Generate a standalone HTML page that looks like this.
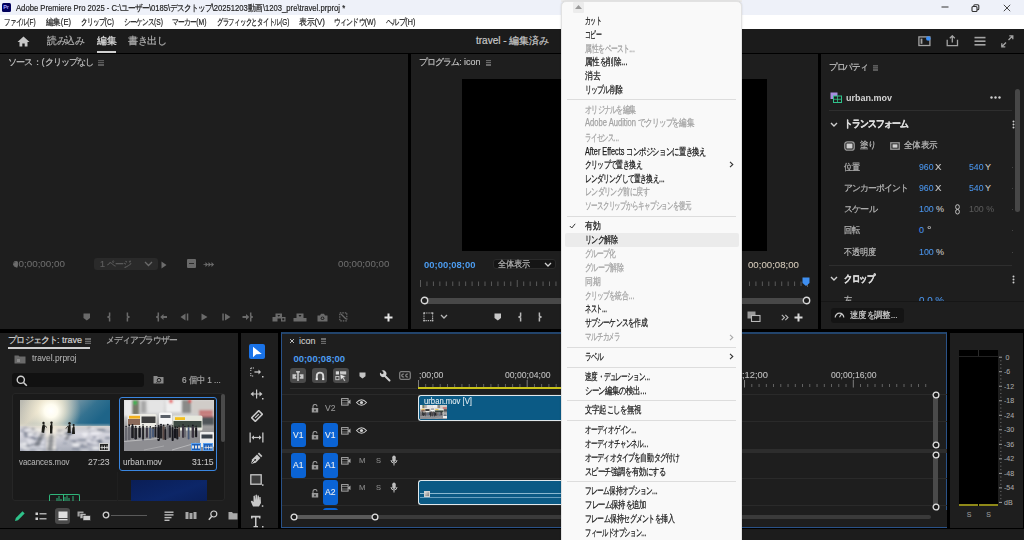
<!DOCTYPE html>
<html><head><meta charset="utf-8"><style>*{box-sizing:border-box;margin:0;padding:0}
html,body{width:1024px;height:540px;overflow:hidden;background:#000;font-family:"Liberation Sans",sans-serif;position:relative}
.a{position:absolute}
.t{position:absolute;white-space:nowrap;line-height:1;transform-origin:0 50%}
</style></head><body>
<div class="a" style="left:0px;top:0px;width:1024px;height:15px;background:#eef1f9;"></div>
<div class="a" style="left:0px;top:15px;width:1024px;height:14px;background:#ffffff;"></div>
<div class="a" style="left:0px;top:29px;width:1024px;height:24px;background:#1b1b1b;"></div>
<div class="a" style="left:0px;top:54px;width:408px;height:275px;background:#1e1e1e;"></div>
<div class="a" style="left:411px;top:54px;width:407px;height:275px;background:#1e1e1e;"></div>
<div class="a" style="left:821px;top:54px;width:203px;height:275px;background:#1e1e1e;"></div>
<div class="a" style="left:0px;top:332.5px;width:237.5px;height:195.5px;background:#1e1e1e;"></div>
<div class="a" style="left:240.5px;top:332.5px;width:37.5px;height:195.5px;background:#1e1e1e;"></div>
<div class="a" style="left:281.2px;top:331.8px;width:666px;height:196.2px;background:#1e1e1e;border:1px solid #2a5288;border-top:2px solid #22446c;"></div>
<div class="a" style="left:950px;top:332.5px;width:73px;height:195.5px;background:#1e1e1e;"></div>
<div class="a" style="left:0px;top:528.5px;width:1024px;height:11.5px;background:#1c1c1c;"></div>
<div class="a" style="left:2px;top:3.3px;width:9.3px;height:8.3px;background:#00005b;border-radius:1.5px;"></div>
<div class="t" style="left:3.2px;top:4.75px;font-size:5.5px;color:#a6a6ff;font-weight:bold;">Pr</div>
<div class="t" style="left:15.5px;top:3.80px;font-size:9px;color:#1f1f1f;transform:scaleX(0.852);-webkit-text-stroke:0.2px #1f1f1f;">Adobe Premiere Pro 2025 - C:\<span style="letter-spacing:-0.1em">ユーザー</span>\0185\<span style="letter-spacing:-0.1em">デスクトップ</span>\20251203<span style="letter-spacing:-0.02em">動画</span>\1203_pre\travel.prproj *</div>
<svg class="a" style="left:940.5px;top:5px;" width="8" height="4" viewBox="0 0 8 4"><line x1="0.5" y1="2" x2="7.5" y2="2" stroke="#333" stroke-width="1"/></svg>
<svg class="a" style="left:971px;top:3.5px;" width="9" height="8" viewBox="0 0 9 8"><rect x="1" y="2.5" width="5" height="5" rx="1" fill="none" stroke="#333" stroke-width="1.1"/><path d="M2.8 2.5V1.8Q2.8 0.8 3.8 0.8H6.8Q7.8 0.8 7.8 1.8V4.8Q7.8 5.8 6.8 5.8H6" fill="none" stroke="#333" stroke-width="1.1"/></svg>
<svg class="a" style="left:1003px;top:3.5px;" width="8" height="8" viewBox="0 0 8 8"><path d="M0.8 0.8L7.2 7.2M7.2 0.8L0.8 7.2" stroke="#333" stroke-width="0.9"/></svg>
<div class="t" style="left:4.4px;top:17.50px;font-size:9px;color:#1f1f1f;transform:scaleX(0.720);-webkit-text-stroke:0.2px #1f1f1f;"><span style="letter-spacing:-0.1em">ファイル</span>(F)</div>
<div class="t" style="left:46px;top:17.50px;font-size:9px;color:#1f1f1f;transform:scaleX(0.843);-webkit-text-stroke:0.2px #1f1f1f;"><span style="letter-spacing:-0.02em">編集</span>(E)</div>
<div class="t" style="left:81px;top:17.50px;font-size:9px;color:#1f1f1f;transform:scaleX(0.735);-webkit-text-stroke:0.2px #1f1f1f;"><span style="letter-spacing:-0.1em">クリップ</span>(C)</div>
<div class="t" style="left:124px;top:17.50px;font-size:9px;color:#1f1f1f;transform:scaleX(0.743);-webkit-text-stroke:0.2px #1f1f1f;"><span style="letter-spacing:-0.1em">シーケンス</span>(S)</div>
<div class="t" style="left:172px;top:17.50px;font-size:9px;color:#1f1f1f;transform:scaleX(0.752);-webkit-text-stroke:0.2px #1f1f1f;"><span style="letter-spacing:-0.1em">マーカー</span>(M)</div>
<div class="t" style="left:216.6px;top:17.50px;font-size:9px;color:#1f1f1f;transform:scaleX(0.709);-webkit-text-stroke:0.2px #1f1f1f;"><span style="letter-spacing:-0.1em">グラフィックとタイトル</span>(G)</div>
<div class="t" style="left:299px;top:17.50px;font-size:9px;color:#1f1f1f;transform:scaleX(0.877);-webkit-text-stroke:0.2px #1f1f1f;"><span style="letter-spacing:-0.02em">表示</span>(V)</div>
<div class="t" style="left:334px;top:17.50px;font-size:9px;color:#1f1f1f;transform:scaleX(0.758);-webkit-text-stroke:0.2px #1f1f1f;"><span style="letter-spacing:-0.1em">ウィンドウ</span>(W)</div>
<div class="t" style="left:385.7px;top:17.50px;font-size:9px;color:#1f1f1f;transform:scaleX(0.796);-webkit-text-stroke:0.2px #1f1f1f;"><span style="letter-spacing:-0.1em">ヘルプ</span>(H)</div>
<svg class="a" style="left:17px;top:36px;" width="13" height="11" viewBox="0 0 13 11"><path d="M6.5 0.5L0.5 6H2.5V10.5H5.3V7.5H7.7V10.5H10.5V6H12.5Z" fill="#c8c8c8"/></svg>
<div class="t" style="left:47px;top:36.00px;font-size:10px;color:#b0b0b0;transform:scaleX(0.983);-webkit-text-stroke:0.2px #b0b0b0;"><span style="letter-spacing:-0.02em">読</span><span style="letter-spacing:-0.1em">み</span><span style="letter-spacing:-0.02em">込</span><span style="letter-spacing:-0.1em">み</span></div>
<div class="t" style="left:96.7px;top:36.00px;font-size:10px;color:#e0e0e0;transform:scaleX(0.984);-webkit-text-stroke:0.2px #e0e0e0;"><span style="letter-spacing:-0.02em">編集</span></div>
<div class="a" style="left:97px;top:51px;width:18.6px;height:1.8px;background:#d0d0d0;"></div>
<div class="t" style="left:128px;top:36.00px;font-size:10px;color:#b0b0b0;transform:scaleX(1.010);-webkit-text-stroke:0.2px #b0b0b0;"><span style="letter-spacing:-0.02em">書</span><span style="letter-spacing:-0.1em">き</span><span style="letter-spacing:-0.02em">出</span><span style="letter-spacing:-0.1em">し</span></div>
<div class="t" style="left:476px;top:36.00px;font-size:10px;color:#c8c8c8;-webkit-text-stroke:0.2px #c8c8c8;">travel - <span style="letter-spacing:-0.02em">編集済</span><span style="letter-spacing:-0.1em">み</span></div>
<svg class="a" style="left:917.5px;top:34px;" width="14" height="13" viewBox="0 0 14 13"><rect x="0.9" y="2.9" width="11" height="8.6" fill="none" stroke="#a4a4a4" stroke-width="1.3"/><rect x="2.6" y="4.6" width="1.8" height="5.2" fill="#a4a4a4"/><circle cx="10.3" cy="4.5" r="2.3" fill="#3d8ff5"/></svg>
<svg class="a" style="left:945.5px;top:34.5px;" width="13" height="12" viewBox="0 0 13 12"><path d="M6.3 0.8V7.5M3.8 3.2L6.3 0.8L8.8 3.2" fill="none" stroke="#a4a4a4" stroke-width="1.3"/><path d="M1.2 4.8V10.6H11.5V4.8" fill="none" stroke="#a4a4a4" stroke-width="1.3"/></svg>
<svg class="a" style="left:973.5px;top:35.5px;" width="12" height="10" viewBox="0 0 12 10"><rect x="0.5" y="0.8" width="11" height="1.6" fill="#a4a4a4"/><rect x="0.5" y="4.4" width="11" height="1.6" fill="#a4a4a4"/><rect x="0.5" y="8" width="11" height="1.6" fill="#a4a4a4"/></svg>
<svg class="a" style="left:1000.5px;top:34.5px;" width="13" height="13" viewBox="0 0 13 13"><path d="M7.5 5L11.8 0.8M8.3 0.8H11.8V4.3M5 7.5L0.8 11.8M0.8 8.3V11.8H4.3" fill="none" stroke="#a4a4a4" stroke-width="1.3"/></svg>
<div class="t" style="left:8.4px;top:58.00px;font-size:9px;color:#bdbdbd;transform:scaleX(1.010);-webkit-text-stroke:0.2px #bdbdbd;"><span style="letter-spacing:-0.1em">ソース</span><span style="letter-spacing:-0.02em">：</span>(<span style="letter-spacing:-0.1em">クリップなし</span></div>
<div class="a" style="left:97.5px;top:59.5px;width:6px;height:6px;background:#5a5a5a;"></div>
<div class="a" style="left:97.5px;top:61.3px;width:6px;height:0.7px;background:#2a2a2a;"></div>
<div class="a" style="left:97.5px;top:63.3px;width:6px;height:0.7px;background:#2a2a2a;"></div>
<div class="t" style="left:12.9px;top:260.00px;font-size:9px;color:#6c6c6c;transform:scaleX(1.094);-webkit-text-stroke:0.08px #6c6c6c;">00;00;00;00</div>
<svg class="a" style="left:12px;top:260px;" width="6" height="9" viewBox="0 0 6 9"><path d="M1 4.5L4 1.5H5.5V7.5H4Z" fill="#6c6c6c"/></svg>
<div class="a" style="left:93.8px;top:258.2px;width:64px;height:11.6px;background:#2a2a2a;border-radius:3px"></div>
<div class="t" style="left:100px;top:259.50px;font-size:9px;color:#5e5e5e;transform:scaleX(0.990);-webkit-text-stroke:0.2px #5e5e5e;">1 <span style="letter-spacing:-0.1em">ページ</span></div>
<svg class="a" style="left:144px;top:261px;" width="9" height="6" viewBox="0 0 9 6"><path d="M1 1L4.5 4.5L8 1" fill="none" stroke="#6a6a6a" stroke-width="1.3"/></svg>
<svg class="a" style="left:161px;top:261px;" width="6" height="8" viewBox="0 0 6 8"><path d="M0.5 0.5L5.5 4L0.5 7.5Z" fill="#6c6c6c"/></svg>
<div class="a" style="left:187px;top:259px;width:8.6px;height:9px;background:#6a6a6a;border-radius:1px"></div>
<div class="a" style="left:189px;top:263px;width:4.6px;height:1px;background:#2a2a2a;"></div>
<svg class="a" style="left:203px;top:261px;" width="11" height="7" viewBox="0 0 11 7"><path d="M0.5 3.5H10.5" stroke="#6a6a6a" stroke-width="0.8"/><path d="M2.5 1L5 3.5L2.5 6ZM5.5 1L8 3.5L5.5 6ZM8.5 1L11 3.5L8.5 6Z" fill="#6a6a6a"/></svg>
<div class="t" style="left:338px;top:260.00px;font-size:9px;color:#6c6c6c;transform:scaleX(1.079);-webkit-text-stroke:0.08px #6c6c6c;">00;00;00;00</div>
<svg class="a" style="left:83px;top:313px;" width="8" height="8" viewBox="0 0 8 8"><path d="M0.5 0.5H7V5L3.8 7.5L0.5 5Z" fill="#6a6a6a"/></svg>
<svg class="a" style="left:106.8px;top:312.0px;" width="4" height="10" viewBox="0 0 4 10"><path d="M2.6 0.5V4.1L1 5L2.6 5.9V9.5" fill="none" stroke="#6a6a6a" stroke-width="1.5"/></svg>
<svg class="a" style="left:126.4px;top:312.0px;" width="4" height="10" viewBox="0 0 4 10"><path d="M1.4 0.5V4.1L3 5L1.4 5.9V9.5" fill="none" stroke="#6a6a6a" stroke-width="1.5"/></svg>
<svg class="a" style="left:156px;top:312px;" width="12" height="10" viewBox="0 0 12 10"><path d="M2.3 0.5V4.1L0.8 5L2.3 5.9V9.5" fill="none" stroke="#6a6a6a" stroke-width="1.5"/><path d="M4.2 5L7.5 2V4H11V6H7.5V8Z" fill="#6a6a6a"/></svg>
<svg class="a" style="left:179.5px;top:312.7px;" width="9" height="8" viewBox="0 0 9 8"><path d="M0.5 4L5.5 0.5V7.5Z" fill="#6a6a6a"/><rect x="6.8" y="0.5" width="1.5" height="7" fill="#6a6a6a"/></svg>
<svg class="a" style="left:201px;top:312.7px;" width="7" height="8" viewBox="0 0 7 8"><path d="M0.5 0.5L6.5 4L0.5 7.5Z" fill="#6a6a6a"/></svg>
<svg class="a" style="left:221.5px;top:312.7px;" width="9" height="8" viewBox="0 0 9 8"><rect x="0.3" y="0.5" width="1.5" height="7" fill="#6a6a6a"/><path d="M3 0.5L8.5 4L3 7.5Z" fill="#6a6a6a"/></svg>
<svg class="a" style="left:242px;top:312px;" width="11" height="10" viewBox="0 0 11 10"><path d="M0.5 4H4V2L7.3 5L4 8V6H0.5Z" fill="#6a6a6a"/><path d="M8.7 0.5V4.1L10.2 5L8.7 5.9V9.5" fill="none" stroke="#6a6a6a" stroke-width="1.5"/></svg>
<svg class="a" style="left:272px;top:312.5px;" width="14" height="9" viewBox="0 0 14 9"><rect x="0.5" y="4" width="5" height="4.5" fill="#6a6a6a"/><rect x="3.5" y="0.5" width="6.5" height="5" fill="#6a6a6a"/><path d="M5.3 2H8.2L6.75 3.8Z" fill="#1e1e1e"/><rect x="9" y="4" width="4.5" height="4.5" fill="#6a6a6a"/><rect x="10.3" y="5.3" width="2" height="2" fill="#1e1e1e"/></svg>
<svg class="a" style="left:293px;top:312.5px;" width="14" height="9" viewBox="0 0 14 9"><rect x="0.5" y="5" width="13" height="3.5" fill="#6a6a6a"/><rect x="3.5" y="0.5" width="7" height="6" fill="#6a6a6a"/><path d="M5.5 2H8.5L7 4Z" fill="#1e1e1e"/></svg>
<svg class="a" style="left:317px;top:312.5px;" width="11" height="9" viewBox="0 0 11 9"><path d="M0.5 2.5H3L4 0.8H7L8 2.5H10.5V8.5H0.5Z" fill="#6a6a6a"/><circle cx="5.5" cy="5.3" r="1.8" fill="#1e1e1e"/><circle cx="5.5" cy="5.3" r="1" fill="#6a6a6a"/></svg>
<svg class="a" style="left:338.5px;top:312px;" width="9" height="10" viewBox="0 0 9 10"><rect x="0.8" y="0.8" width="7" height="8" fill="none" stroke="#6a6a6a" stroke-width="1.2" stroke-dasharray="1.5 1"/><path d="M2 2L7 7" stroke="#6a6a6a" stroke-width="1.2"/></svg>
<svg class="a" style="left:384px;top:313px;" width="9" height="9" viewBox="0 0 9 9"><path d="M4.5 0.5V8.5M0.5 4.5H8.5" stroke="#e6e6e6" stroke-width="2"/></svg>
<div class="t" style="left:419px;top:58.00px;font-size:9px;color:#bdbdbd;transform:scaleX(0.991);-webkit-text-stroke:0.2px #bdbdbd;"><span style="letter-spacing:-0.1em">プログラム</span>: icon</div>
<div class="a" style="left:485.5px;top:59.5px;width:5.2px;height:6px;background:#6a6a6a;"></div>
<div class="a" style="left:485.5px;top:61.3px;width:5.2px;height:0.7px;background:#2a2a2a;"></div>
<div class="a" style="left:485.5px;top:63.3px;width:5.2px;height:0.7px;background:#2a2a2a;"></div>
<div class="a" style="left:462px;top:79px;width:305px;height:171.5px;background:#000000;"></div>
<div class="t" style="left:424.4px;top:259.75px;font-size:9.5px;color:#4c9cf0;font-weight:bold;transform:scaleX(0.993);">00;00;08;00</div>
<div class="a" style="left:492.7px;top:258.5px;width:63.3px;height:10.5px;background:#151515;border:1px solid #2a2a2a;border-radius:3px"></div>
<div class="t" style="left:498px;top:259.50px;font-size:9px;color:#b4b4b4;transform:scaleX(0.907);-webkit-text-stroke:0.2px #b4b4b4;"><span style="letter-spacing:-0.02em">全体表示</span></div>
<svg class="a" style="left:543.5px;top:261.5px;" width="8" height="6" viewBox="0 0 8 6"><path d="M1 1L4 4L7 1" fill="none" stroke="#d0d0d0" stroke-width="1.3"/></svg>
<div class="t" style="left:748px;top:259.75px;font-size:9.5px;color:#d2c8b8;transform:scaleX(1.016);-webkit-text-stroke:0.08px #d2c8b8;">00;00;08;00</div>
<svg class="a" style="left:411px;top:278px;" width="407" height="12" viewBox="0 0 407 12"><rect x="9.00" y="2" width="1" height="7" fill="#5a5a5a"/><rect x="15.45" y="3.5" width="1" height="4.5" fill="#5a5a5a"/><rect x="21.90" y="3.5" width="1" height="4.5" fill="#5a5a5a"/><rect x="28.35" y="3.5" width="1" height="4.5" fill="#5a5a5a"/><rect x="34.80" y="3.5" width="1" height="4.5" fill="#5a5a5a"/><rect x="41.25" y="3.5" width="1" height="4.5" fill="#5a5a5a"/><rect x="47.70" y="3.5" width="1" height="4.5" fill="#5a5a5a"/><rect x="54.15" y="3.5" width="1" height="4.5" fill="#5a5a5a"/><rect x="60.60" y="3.5" width="1" height="4.5" fill="#5a5a5a"/><rect x="67.05" y="3.5" width="1" height="4.5" fill="#5a5a5a"/><rect x="73.50" y="3.5" width="1" height="4.5" fill="#5a5a5a"/><rect x="79.95" y="3.5" width="1" height="4.5" fill="#5a5a5a"/><rect x="86.40" y="3.5" width="1" height="4.5" fill="#5a5a5a"/><rect x="92.85" y="3.5" width="1" height="4.5" fill="#5a5a5a"/><rect x="99.30" y="3.5" width="1" height="4.5" fill="#5a5a5a"/><rect x="105.75" y="2" width="1" height="7" fill="#5a5a5a"/><rect x="112.20" y="3.5" width="1" height="4.5" fill="#5a5a5a"/><rect x="118.65" y="3.5" width="1" height="4.5" fill="#5a5a5a"/><rect x="125.10" y="3.5" width="1" height="4.5" fill="#5a5a5a"/><rect x="131.55" y="3.5" width="1" height="4.5" fill="#5a5a5a"/><rect x="138.00" y="3.5" width="1" height="4.5" fill="#5a5a5a"/><rect x="144.45" y="3.5" width="1" height="4.5" fill="#5a5a5a"/><rect x="337.95" y="3.5" width="1" height="4.5" fill="#5a5a5a"/><rect x="344.40" y="3.5" width="1" height="4.5" fill="#5a5a5a"/><rect x="350.85" y="3.5" width="1" height="4.5" fill="#5a5a5a"/><rect x="357.30" y="3.5" width="1" height="4.5" fill="#5a5a5a"/><rect x="363.75" y="3.5" width="1" height="4.5" fill="#5a5a5a"/><rect x="370.20" y="3.5" width="1" height="4.5" fill="#5a5a5a"/><rect x="376.65" y="3.5" width="1" height="4.5" fill="#5a5a5a"/><rect x="383.10" y="3.5" width="1" height="4.5" fill="#5a5a5a"/><rect x="389.55" y="3.5" width="1" height="4.5" fill="#5a5a5a"/><rect x="396.00" y="2" width="1" height="7" fill="#5a5a5a"/></svg>
<svg class="a" style="left:802px;top:276.5px;" width="8" height="10" viewBox="0 0 8 10"><path d="M0.5 0.5H7.5V6L4 9L0.5 6Z" fill="#3f8ff0"/></svg>
<div class="a" style="left:424px;top:297.5px;width:382px;height:6px;background:#484848;border-radius:3px;"></div>
<svg class="a" style="left:420px;top:296px;" width="9" height="9" viewBox="0 0 9 9"><circle cx="4.5" cy="4.5" r="3.2" fill="#1e1e1e" stroke="#d8d8d8" stroke-width="1.4"/></svg>
<svg class="a" style="left:802px;top:296px;" width="9" height="9" viewBox="0 0 9 9"><circle cx="4.5" cy="4.5" r="3.2" fill="#1e1e1e" stroke="#d8d8d8" stroke-width="1.4"/></svg>
<svg class="a" style="left:422.5px;top:312.3px;" width="11" height="10" viewBox="0 0 11 10"><rect x="1" y="1" width="8.6" height="7.6" fill="none" stroke="#b8b8b8" stroke-width="1.1" stroke-dasharray="1.3 0.9"/><rect x="0.3" y="0.3" width="1.6" height="1.6" fill="#b8b8b8"/><rect x="8.7" y="0.3" width="1.6" height="1.6" fill="#b8b8b8"/><rect x="0.3" y="7.7" width="1.6" height="1.6" fill="#b8b8b8"/><rect x="8.7" y="7.7" width="1.6" height="1.6" fill="#b8b8b8"/></svg>
<svg class="a" style="left:439.5px;top:314px;" width="8" height="6" viewBox="0 0 8 6"><path d="M1 1L4 4L7 1" fill="none" stroke="#b8b8b8" stroke-width="1.3"/></svg>
<svg class="a" style="left:494px;top:313px;" width="8" height="8" viewBox="0 0 8 8"><path d="M0.5 0.5H7V5L3.8 7.5L0.5 5Z" fill="#c8c8c8"/></svg>
<svg class="a" style="left:518px;top:312.0px;" width="4" height="10" viewBox="0 0 4 10"><path d="M2.6 0.5V4.1L1 5L2.6 5.9V9.5" fill="none" stroke="#b8b8b8" stroke-width="1.5"/></svg>
<svg class="a" style="left:537.5px;top:312.0px;" width="4" height="10" viewBox="0 0 4 10"><path d="M1.4 0.5V4.1L3 5L1.4 5.9V9.5" fill="none" stroke="#b8b8b8" stroke-width="1.5"/></svg>
<svg class="a" style="left:746.5px;top:311px;" width="14" height="11" viewBox="0 0 14 11"><rect x="0.5" y="0.5" width="8" height="7" fill="#9a9a9a"/><rect x="4.5" y="4.5" width="8.5" height="6" fill="#1e1e1e" stroke="#b8b8b8" stroke-width="1.1"/></svg>
<svg class="a" style="left:780.5px;top:314px;" width="8" height="7" viewBox="0 0 8 7"><path d="M0.8 0.8L3.5 3.5L0.8 6.2M4.3 0.8L7 3.5L4.3 6.2" fill="none" stroke="#b8b8b8" stroke-width="1.1"/></svg>
<svg class="a" style="left:793.5px;top:313px;" width="9" height="9" viewBox="0 0 9 9"><path d="M4.5 0.5V8.5M0.5 4.5H8.5" stroke="#d8d8d8" stroke-width="2"/></svg>
<div class="t" style="left:829.4px;top:63.00px;font-size:9px;color:#bdbdbd;transform:scaleX(0.953);-webkit-text-stroke:0.2px #bdbdbd;"><span style="letter-spacing:-0.1em">プロパティ</span></div>
<div class="a" style="left:872.8px;top:64.5px;width:5.2px;height:6px;background:#5a5a5a;"></div>
<div class="a" style="left:872.8px;top:66.3px;width:5.2px;height:0.7px;background:#444;"></div>
<div class="a" style="left:872.8px;top:68.3px;width:5.2px;height:0.7px;background:#444;"></div>
<svg class="a" style="left:830px;top:92px;" width="12" height="11" viewBox="0 0 12 11"><rect x="0.5" y="0.5" width="7" height="6.5" fill="#a88ee0"/><rect x="3.5" y="4" width="8" height="6.5" fill="#1e1e1e" stroke="#2fc28a" stroke-width="1"/><path d="M3.5 7.25H11.5M7.5 4V10.5" stroke="#2fc28a" stroke-width="0.8"/></svg>
<div class="t" style="left:846px;top:92.75px;font-size:9.5px;color:#d4d4d4;font-weight:bold;transform:scaleX(0.947);">urban.mov</div>
<svg class="a" style="left:990px;top:95.5px;" width="11" height="3" viewBox="0 0 11 3"><circle cx="1.5" cy="1.5" r="1.2" fill="#cfcfcf"/><circle cx="5.5" cy="1.5" r="1.2" fill="#cfcfcf"/><circle cx="9.5" cy="1.5" r="1.2" fill="#cfcfcf"/></svg>
<div class="a" style="left:829px;top:110px;width:183px;height:1px;background:#2e2e2e;"></div>
<svg class="a" style="left:829.5px;top:121.5px;" width="8" height="6" viewBox="0 0 8 6"><path d="M1 1L4 4L7 1" fill="none" stroke="#d0d0d0" stroke-width="1.4"/></svg>
<div class="t" style="left:843.7px;top:119.45px;font-size:9.5px;color:#dadada;font-weight:bold;transform:scaleX(0.878);-webkit-text-stroke:0.35px #dadada;"><span style="letter-spacing:-0.1em">トランスフォーム</span></div>
<svg class="a" style="left:1011.5px;top:120px;" width="3" height="9" viewBox="0 0 3 9"><circle cx="1.5" cy="1.5" r="1" fill="#cfcfcf"/><circle cx="1.5" cy="4.5" r="1" fill="#cfcfcf"/><circle cx="1.5" cy="7.5" r="1" fill="#cfcfcf"/></svg>
<div class="a" style="left:1014.5px;top:89px;width:5.5px;height:123px;background:#474747;border-radius:3px;"></div>
<svg class="a" style="left:844px;top:141px;" width="11" height="10" viewBox="0 0 11 10"><rect x="0.8" y="0.8" width="9.4" height="8.4" rx="2.5" fill="none" stroke="#9a9a9a" stroke-width="1.3"/><rect x="2.5" y="2.5" width="6" height="5" fill="#cfcfcf"/></svg>
<div class="t" style="left:859.7px;top:141.00px;font-size:9px;color:#bdbdbd;transform:scaleX(0.921);-webkit-text-stroke:0.2px #bdbdbd;"><span style="letter-spacing:-0.02em">塗</span><span style="letter-spacing:-0.1em">り</span></div>
<svg class="a" style="left:889.5px;top:142px;" width="10" height="8" viewBox="0 0 10 8"><rect x="0.8" y="0.8" width="8.4" height="6.4" fill="none" stroke="#9a9a9a" stroke-width="1.3"/><rect x="2.5" y="2.3" width="5" height="3.4" fill="#cfcfcf"/></svg>
<div class="t" style="left:904px;top:141.00px;font-size:9px;color:#bdbdbd;transform:scaleX(0.950);-webkit-text-stroke:0.2px #bdbdbd;"><span style="letter-spacing:-0.02em">全体表示</span></div>
<div class="t" style="left:844.4px;top:162.90px;font-size:9px;color:#b8b8b8;transform:scaleX(0.907);-webkit-text-stroke:0.2px #b8b8b8;"><span style="letter-spacing:-0.02em">位置</span></div>
<div class="t" style="left:844.4px;top:183.80px;font-size:9px;color:#b8b8b8;transform:scaleX(0.981);-webkit-text-stroke:0.2px #b8b8b8;"><span style="letter-spacing:-0.1em">アンカーポイント</span></div>
<div class="t" style="left:844.4px;top:205.00px;font-size:9px;color:#b8b8b8;transform:scaleX(1.012);-webkit-text-stroke:0.2px #b8b8b8;"><span style="letter-spacing:-0.1em">スケール</span></div>
<div class="t" style="left:844.4px;top:226.10px;font-size:9px;color:#b8b8b8;transform:scaleX(0.907);-webkit-text-stroke:0.2px #b8b8b8;"><span style="letter-spacing:-0.02em">回転</span></div>
<div class="t" style="left:844.4px;top:247.50px;font-size:9px;color:#b8b8b8;transform:scaleX(0.907);-webkit-text-stroke:0.2px #b8b8b8;"><span style="letter-spacing:-0.02em">不透明度</span></div>
<div class="a" style="left:1011.5px;top:166.9px;width:1px;height:1px;background:#444;"></div>
<div class="a" style="left:1011.5px;top:187.8px;width:1px;height:1px;background:#444;"></div>
<div class="a" style="left:1011.5px;top:209.0px;width:1px;height:1px;background:#444;"></div>
<div class="a" style="left:1011.5px;top:230.1px;width:1px;height:1px;background:#444;"></div>
<div class="a" style="left:1011.5px;top:251.5px;width:1px;height:1px;background:#444;"></div>
<div class="t" style="left:919px;top:162.90px;font-size:9px;color:#4a94ea;transform:scaleX(0.965);-webkit-text-stroke:0.08px #4a94ea;">960</div>
<div class="t" style="left:935px;top:162.90px;font-size:9px;color:#c8c8c8;transform:scaleX(1.081);-webkit-text-stroke:0.08px #c8c8c8;">X</div>
<div class="t" style="left:969px;top:162.90px;font-size:9px;color:#4a94ea;transform:scaleX(0.965);-webkit-text-stroke:0.08px #4a94ea;">540</div>
<div class="t" style="left:985px;top:162.90px;font-size:9px;color:#c8c8c8;-webkit-text-stroke:0.08px #c8c8c8;">Y</div>
<div class="t" style="left:919px;top:183.80px;font-size:9px;color:#4a94ea;transform:scaleX(0.965);-webkit-text-stroke:0.08px #4a94ea;">960</div>
<div class="t" style="left:935px;top:183.80px;font-size:9px;color:#c8c8c8;transform:scaleX(1.081);-webkit-text-stroke:0.08px #c8c8c8;">X</div>
<div class="t" style="left:969px;top:183.80px;font-size:9px;color:#4a94ea;transform:scaleX(0.965);-webkit-text-stroke:0.08px #4a94ea;">540</div>
<div class="t" style="left:985px;top:183.80px;font-size:9px;color:#c8c8c8;-webkit-text-stroke:0.08px #c8c8c8;">Y</div>
<div class="t" style="left:919px;top:205.00px;font-size:9px;color:#4a94ea;transform:scaleX(0.985);-webkit-text-stroke:0.08px #4a94ea;">100</div>
<div class="t" style="left:936px;top:205.00px;font-size:9px;color:#c8c8c8;-webkit-text-stroke:0.08px #c8c8c8;">%</div>
<svg class="a" style="left:955px;top:204px;" width="5" height="11" viewBox="0 0 5 11"><rect x="0.7" y="0.7" width="3.6" height="4.5" rx="1.8" fill="none" stroke="#c8c8c8" stroke-width="1"/><rect x="0.7" y="5.5" width="3.6" height="4.5" rx="1.8" fill="none" stroke="#c8c8c8" stroke-width="1"/></svg>
<div class="t" style="left:969px;top:205.00px;font-size:9px;color:#5a5a5a;transform:scaleX(0.979);-webkit-text-stroke:0.08px #5a5a5a;">100 %</div>
<div class="t" style="left:919px;top:226.10px;font-size:9px;color:#4a94ea;-webkit-text-stroke:0.08px #4a94ea;">0</div>
<div class="t" style="left:927px;top:226.10px;font-size:9px;color:#c8c8c8;transform:scaleX(1.247);-webkit-text-stroke:0.08px #c8c8c8;">°</div>
<div class="t" style="left:919px;top:247.50px;font-size:9px;color:#4a94ea;transform:scaleX(0.985);-webkit-text-stroke:0.08px #4a94ea;">100</div>
<div class="t" style="left:936px;top:247.50px;font-size:9px;color:#c8c8c8;-webkit-text-stroke:0.08px #c8c8c8;">%</div>
<div class="a" style="left:829px;top:265px;width:183px;height:1px;background:#2e2e2e;"></div>
<svg class="a" style="left:829.5px;top:276px;" width="8" height="6" viewBox="0 0 8 6"><path d="M1 1L4 4L7 1" fill="none" stroke="#d0d0d0" stroke-width="1.4"/></svg>
<div class="t" style="left:843.7px;top:274.25px;font-size:9.5px;color:#dadada;font-weight:bold;transform:scaleX(0.837);-webkit-text-stroke:0.35px #dadada;"><span style="letter-spacing:-0.1em">クロップ</span></div>
<svg class="a" style="left:1011.5px;top:275px;" width="3" height="9" viewBox="0 0 3 9"><circle cx="1.5" cy="1.5" r="1" fill="#cfcfcf"/><circle cx="1.5" cy="4.5" r="1" fill="#cfcfcf"/><circle cx="1.5" cy="7.5" r="1" fill="#cfcfcf"/></svg>
<div class="t" style="left:844.4px;top:296.00px;font-size:9px;color:#b8b8b8;transform:scaleX(0.906);-webkit-text-stroke:0.2px #b8b8b8;"><span style="letter-spacing:-0.02em">左</span></div>
<div class="t" style="left:919px;top:296.00px;font-size:9px;color:#4a94ea;transform:scaleX(1.086);-webkit-text-stroke:0.08px #4a94ea;">0.0 %</div>
<div class="a" style="left:821px;top:301px;width:203px;height:28px;background:#1e1e1e;"></div>
<div class="a" style="left:821px;top:301px;width:203px;height:1px;background:#161616;"></div>
<div class="a" style="left:830.6px;top:308px;width:73.2px;height:15px;background:#141414;border-radius:3px"></div>
<svg class="a" style="left:834px;top:310px;" width="11" height="9" viewBox="0 0 11 9"><path d="M1.2 7.5A4.3 4.3 0 1 1 9.8 7.5" fill="none" stroke="#c8c8c8" stroke-width="1.2"/><path d="M5.5 7.3L7.8 3.5" stroke="#c8c8c8" stroke-width="1.2"/></svg>
<div class="t" style="left:850px;top:311.00px;font-size:9px;color:#cfcfcf;transform:scaleX(0.937);-webkit-text-stroke:0.2px #cfcfcf;"><span style="letter-spacing:-0.02em">速度</span><span style="letter-spacing:-0.1em">を</span><span style="letter-spacing:-0.02em">調整</span>...</div>
<div class="t" style="left:8.4px;top:336.30px;font-size:9px;color:#d0d0d0;-webkit-text-stroke:0.2px #d0d0d0;"><span style="letter-spacing:-0.1em">プロジェクト</span>: trave</div>
<div class="a" style="left:85px;top:338px;width:6px;height:6px;background:#6a6a6a;"></div>
<div class="a" style="left:85px;top:339.8px;width:6px;height:0.7px;background:#333;"></div>
<div class="a" style="left:85px;top:341.8px;width:6px;height:0.7px;background:#333;"></div>
<div class="a" style="left:8.4px;top:347px;width:82px;height:1.6px;background:#d0d0d0;"></div>
<div class="t" style="left:106px;top:336.30px;font-size:9px;color:#a8a8a8;transform:scaleX(0.974);-webkit-text-stroke:0.2px #a8a8a8;"><span style="letter-spacing:-0.1em">メディアブラウザー</span></div>
<svg class="a" style="left:13.5px;top:354px;" width="12" height="10" viewBox="0 0 12 10"><path d="M0.5 1.5H4.5L5.5 2.5H11.5V9.5H0.5Z" fill="#6a6a6a"/><rect x="3" y="5" width="3" height="3" fill="#8a8a8a"/></svg>
<div class="t" style="left:31.6px;top:354.30px;font-size:9px;color:#b0b0b0;transform:scaleX(0.936);-webkit-text-stroke:0.08px #b0b0b0;">travel.prproj</div>
<div class="a" style="left:12.4px;top:372.8px;width:132px;height:14.4px;background:#111111;border-radius:3px"></div>
<svg class="a" style="left:16px;top:374.5px;" width="12" height="12" viewBox="0 0 12 12"><circle cx="4.8" cy="4.8" r="3.6" fill="none" stroke="#d0d0d0" stroke-width="1.4"/><path d="M7.5 7.5L10.8 10.8" stroke="#d0d0d0" stroke-width="1.6"/></svg>
<svg class="a" style="left:153px;top:375px;" width="11" height="9" viewBox="0 0 11 9"><path d="M0.5 1H4L5 2H10.5V8.5H0.5Z" fill="#8a8a8a"/><circle cx="6" cy="5.2" r="1.8" fill="none" stroke="#1e1e1e" stroke-width="1"/><path d="M4.8 6.5L3.5 7.8" stroke="#1e1e1e" stroke-width="1"/></svg>
<div class="t" style="left:181.8px;top:376.00px;font-size:9px;color:#a8a8a8;transform:scaleX(0.909);-webkit-text-stroke:0.2px #a8a8a8;">6 <span style="letter-spacing:-0.02em">個中</span> 1 ...</div>
<div class="a" style="left:12.4px;top:393.2px;width:213px;height:108px;background:#1a1a1a;border:1px solid #262626;border-radius:3px"></div>
<div class="a" style="left:220.5px;top:394px;width:4.5px;height:47.5px;background:#4a4a4a;border-radius:2px;"></div>
<svg class="a" style="left:19.7px;top:400px" width="90.3" height="51.4" viewBox="0 0 90.3 51.4">
<defs>
<linearGradient id="vsky" x1="0" y1="0" x2="1" y2="0.3"><stop offset="0" stop-color="#b8b8b0"/><stop offset="0.3" stop-color="#d4d0c0"/><stop offset="0.55" stop-color="#7a98a6"/><stop offset="0.8" stop-color="#347290"/><stop offset="1" stop-color="#1e6488"/></linearGradient>
<radialGradient id="vsun" cx="31" cy="11" r="30" gradientUnits="userSpaceOnUse"><stop offset="0" stop-color="#ffffff"/><stop offset="0.22" stop-color="#fffdf0"/><stop offset="0.45" stop-color="#f8f0d8" stop-opacity="0.75"/><stop offset="1" stop-color="#e8e0c8" stop-opacity="0"/></radialGradient>
<linearGradient id="vsnow" x1="0" y1="0" x2="0" y2="1"><stop offset="0" stop-color="#c8c8cc"/><stop offset="0.3" stop-color="#d8d8e0"/><stop offset="1" stop-color="#a8acb8"/></linearGradient>
<filter id="vb" x="-20%" y="-20%" width="140%" height="140%"><feGaussianBlur stdDeviation="0.45"/></filter>
<filter id="vb2" x="-20%" y="-20%" width="140%" height="140%"><feGaussianBlur stdDeviation="0.9"/></filter>
</defs>
<rect width="90.3" height="27" fill="url(#vsky)"/>
<rect y="26" width="90.3" height="25.4" fill="url(#vsnow)"/>
<g filter="url(#vb2)"><ellipse cx="56.1" cy="44.8" rx="4.2" ry="1.4" fill="#ffffff" opacity="0.84"/><ellipse cx="69.8" cy="33.0" rx="1.4" ry="0.7" fill="#4a5468" opacity="0.50"/><ellipse cx="9.2" cy="33.0" rx="4.0" ry="0.9" fill="#5a6478" opacity="0.41"/><ellipse cx="71.7" cy="30.3" rx="3.5" ry="0.6" fill="#4a5468" opacity="0.43"/><ellipse cx="19.4" cy="50.6" rx="4.5" ry="0.8" fill="#ffffff" opacity="0.57"/><ellipse cx="87.2" cy="31.7" rx="4.9" ry="0.9" fill="#5a6478" opacity="0.42"/><ellipse cx="13.1" cy="28.6" rx="2.3" ry="1.1" fill="#6a7088" opacity="0.63"/><ellipse cx="5.9" cy="35.5" rx="2.4" ry="1.2" fill="#5a6478" opacity="0.63"/><ellipse cx="5.1" cy="50.4" rx="1.3" ry="1.2" fill="#ffffff" opacity="0.72"/><ellipse cx="37.7" cy="36.0" rx="4.4" ry="1.0" fill="#ffffff" opacity="0.55"/><ellipse cx="22.1" cy="46.7" rx="3.0" ry="1.0" fill="#f4f4fa" opacity="0.81"/><ellipse cx="9.7" cy="45.0" rx="4.2" ry="1.4" fill="#4a5468" opacity="0.43"/><ellipse cx="46.2" cy="35.7" rx="1.8" ry="0.8" fill="#ffffff" opacity="0.62"/><ellipse cx="28.5" cy="31.3" rx="1.5" ry="0.6" fill="#f4f4fa" opacity="0.56"/><ellipse cx="4.4" cy="50.7" rx="3.2" ry="0.9" fill="#6a7088" opacity="0.49"/><ellipse cx="22.5" cy="42.6" rx="1.8" ry="1.5" fill="#f4f4fa" opacity="0.63"/><ellipse cx="18.6" cy="50.6" rx="3.3" ry="0.6" fill="#f4f4fa" opacity="0.54"/><ellipse cx="39.1" cy="30.6" rx="4.4" ry="0.8" fill="#6a7088" opacity="0.69"/><ellipse cx="87.8" cy="37.9" rx="3.1" ry="1.2" fill="#5a6478" opacity="0.54"/><ellipse cx="81.2" cy="29.7" rx="4.3" ry="1.0" fill="#5a6478" opacity="0.70"/><ellipse cx="16.2" cy="38.8" rx="3.2" ry="1.0" fill="#ffffff" opacity="0.81"/><ellipse cx="69.7" cy="43.7" rx="3.7" ry="1.3" fill="#6a7088" opacity="0.62"/><ellipse cx="75.2" cy="33.4" rx="4.9" ry="1.2" fill="#f4f4fa" opacity="0.76"/><ellipse cx="52.3" cy="27.3" rx="3.3" ry="0.8" fill="#f4f4fa" opacity="0.62"/><ellipse cx="45.0" cy="43.2" rx="2.6" ry="0.8" fill="#5a6478" opacity="0.49"/><ellipse cx="75.9" cy="47.9" rx="3.8" ry="1.5" fill="#ffffff" opacity="0.71"/><ellipse cx="15.0" cy="47.1" rx="4.8" ry="1.0" fill="#f4f4fa" opacity="0.57"/><ellipse cx="70.2" cy="40.9" rx="3.7" ry="0.9" fill="#f4f4fa" opacity="0.79"/><ellipse cx="2.5" cy="30.8" rx="2.9" ry="1.2" fill="#6a7088" opacity="0.42"/><ellipse cx="64.7" cy="50.7" rx="4.9" ry="0.7" fill="#ffffff" opacity="0.63"/><ellipse cx="16.3" cy="31.6" rx="1.3" ry="1.0" fill="#6a7088" opacity="0.38"/><ellipse cx="18.4" cy="44.2" rx="2.6" ry="0.9" fill="#f4f4fa" opacity="0.85"/><ellipse cx="62.0" cy="40.1" rx="4.9" ry="1.0" fill="#5a6478" opacity="0.57"/><ellipse cx="30.5" cy="40.9" rx="4.8" ry="1.3" fill="#6a7088" opacity="0.61"/><ellipse cx="33.2" cy="30.4" rx="3.5" ry="1.1" fill="#ffffff" opacity="0.74"/><ellipse cx="31.6" cy="48.4" rx="1.2" ry="0.6" fill="#ffffff" opacity="0.63"/><ellipse cx="78.9" cy="40.5" rx="2.8" ry="1.5" fill="#5a6478" opacity="0.74"/><ellipse cx="34.2" cy="50.1" rx="4.7" ry="1.1" fill="#5a6478" opacity="0.55"/><ellipse cx="37.4" cy="34.7" rx="4.9" ry="1.0" fill="#5a6478" opacity="0.36"/><ellipse cx="59.4" cy="50.1" rx="2.1" ry="0.5" fill="#5a6478" opacity="0.36"/><ellipse cx="47.9" cy="33.6" rx="4.8" ry="1.3" fill="#5a6478" opacity="0.69"/><ellipse cx="64.9" cy="33.9" rx="3.1" ry="1.5" fill="#ffffff" opacity="0.51"/><ellipse cx="11.3" cy="33.8" rx="3.9" ry="1.1" fill="#ffffff" opacity="0.69"/><ellipse cx="32.5" cy="44.9" rx="3.4" ry="0.5" fill="#5a6478" opacity="0.62"/><ellipse cx="9.7" cy="43.5" rx="1.9" ry="0.9" fill="#f4f4fa" opacity="0.84"/><ellipse cx="75.7" cy="38.4" rx="3.8" ry="1.2" fill="#f4f4fa" opacity="0.83"/><ellipse cx="5.9" cy="47.1" rx="3.8" ry="0.9" fill="#5a6478" opacity="0.71"/><ellipse cx="12.8" cy="38.5" rx="3.3" ry="1.0" fill="#4a5468" opacity="0.52"/><ellipse cx="48.7" cy="28.2" rx="4.0" ry="0.8" fill="#4a5468" opacity="0.62"/><ellipse cx="2.3" cy="44.3" rx="4.9" ry="1.5" fill="#ffffff" opacity="0.55"/><ellipse cx="11.0" cy="41.7" rx="4.3" ry="0.6" fill="#f4f4fa" opacity="0.78"/><ellipse cx="39.4" cy="31.4" rx="1.9" ry="1.3" fill="#4a5468" opacity="0.37"/><ellipse cx="9.7" cy="36.1" rx="1.5" ry="0.6" fill="#f4f4fa" opacity="0.85"/><ellipse cx="12.1" cy="37.4" rx="2.4" ry="1.1" fill="#6a7088" opacity="0.50"/><ellipse cx="5.0" cy="43.7" rx="1.8" ry="1.1" fill="#ffffff" opacity="0.61"/><ellipse cx="49.7" cy="33.1" rx="4.1" ry="1.0" fill="#4a5468" opacity="0.70"/><ellipse cx="40.8" cy="36.3" rx="1.7" ry="0.5" fill="#6a7088" opacity="0.62"/><ellipse cx="8.2" cy="30.0" rx="3.5" ry="0.7" fill="#f4f4fa" opacity="0.89"/><ellipse cx="9.7" cy="39.7" rx="3.3" ry="0.9" fill="#f4f4fa" opacity="0.77"/><ellipse cx="20.1" cy="29.8" rx="4.9" ry="1.2" fill="#ffffff" opacity="0.78"/><ellipse cx="33.8" cy="47.1" rx="2.3" ry="1.4" fill="#f4f4fa" opacity="0.65"/><ellipse cx="65.0" cy="35.6" rx="2.3" ry="1.1" fill="#f4f4fa" opacity="0.71"/><ellipse cx="53.3" cy="40.8" rx="4.0" ry="0.9" fill="#4a5468" opacity="0.42"/><ellipse cx="17.6" cy="38.8" rx="4.8" ry="1.2" fill="#5a6478" opacity="0.54"/><ellipse cx="80.1" cy="41.9" rx="2.8" ry="1.0" fill="#4a5468" opacity="0.61"/><ellipse cx="6.4" cy="47.9" rx="4.5" ry="1.0" fill="#ffffff" opacity="0.61"/><ellipse cx="14.5" cy="33.9" rx="2.1" ry="1.0" fill="#5a6478" opacity="0.48"/><ellipse cx="5.3" cy="27.5" rx="2.9" ry="1.3" fill="#6a7088" opacity="0.48"/><ellipse cx="40.8" cy="32.8" rx="5.0" ry="0.5" fill="#ffffff" opacity="0.76"/><ellipse cx="55.6" cy="48.9" rx="3.9" ry="1.2" fill="#5a6478" opacity="0.46"/><ellipse cx="65.9" cy="44.2" rx="1.8" ry="0.7" fill="#ffffff" opacity="0.76"/><ellipse cx="38.8" cy="50.4" rx="1.2" ry="0.6" fill="#f4f4fa" opacity="0.57"/><ellipse cx="3.0" cy="47.1" rx="4.4" ry="1.1" fill="#ffffff" opacity="0.59"/><ellipse cx="72.3" cy="29.2" rx="3.0" ry="1.2" fill="#f4f4fa" opacity="0.66"/><ellipse cx="5.4" cy="33.1" rx="2.7" ry="0.8" fill="#4a5468" opacity="0.73"/><ellipse cx="17.5" cy="43.7" rx="3.6" ry="0.7" fill="#5a6478" opacity="0.67"/><ellipse cx="7.8" cy="50.6" rx="1.8" ry="0.6" fill="#ffffff" opacity="0.68"/><ellipse cx="32.2" cy="37.2" rx="4.1" ry="1.0" fill="#4a5468" opacity="0.72"/><ellipse cx="27.7" cy="37.8" rx="4.3" ry="0.7" fill="#5a6478" opacity="0.54"/><ellipse cx="70.2" cy="33.3" rx="2.7" ry="0.6" fill="#f4f4fa" opacity="0.60"/><ellipse cx="7.6" cy="37.3" rx="3.4" ry="0.7" fill="#6a7088" opacity="0.45"/><ellipse cx="63.3" cy="46.1" rx="4.6" ry="1.4" fill="#5a6478" opacity="0.50"/><ellipse cx="69.2" cy="27.0" rx="2.3" ry="1.4" fill="#4a5468" opacity="0.53"/><ellipse cx="73.5" cy="42.7" rx="4.8" ry="1.2" fill="#f4f4fa" opacity="0.54"/><ellipse cx="72.5" cy="40.5" rx="2.4" ry="0.8" fill="#5a6478" opacity="0.62"/><ellipse cx="25.7" cy="28.5" rx="4.1" ry="1.1" fill="#4a5468" opacity="0.74"/><ellipse cx="74.4" cy="37.5" rx="2.2" ry="1.5" fill="#6a7088" opacity="0.52"/><ellipse cx="32.6" cy="34.9" rx="1.2" ry="1.1" fill="#ffffff" opacity="0.61"/><ellipse cx="54.5" cy="42.1" rx="1.7" ry="1.3" fill="#5a6478" opacity="0.40"/><ellipse cx="28.5" cy="49.0" rx="3.0" ry="0.9" fill="#6a7088" opacity="0.72"/>
<rect x="26" y="27" width="10" height="24" fill="#fff8e8" opacity="0.45"/>
<rect x="0" y="25" width="90.3" height="2" fill="#e4e0d4" opacity="0.7"/>
</g>
<rect width="90.3" height="51.4" fill="url(#vsun)"/>
<g filter="url(#vb)" fill="#1a1a18">
<path d="M21.5 32.5L22 27L22.8 24.5L24.5 24.2L25 27L24.2 33Z"/><circle cx="23.5" cy="23" r="1.2"/><path d="M24.5 25.5L27 27.5" stroke="#1a1a18" stroke-width="0.8"/>
<path d="M30 33.5L30 26L31 24L32.3 24L32.6 27L32.3 33.5Z"/><circle cx="31.5" cy="22.8" r="1.2"/>
<path d="M47.5 33L48 27L49 24.5L50.5 24.5L50.8 33Z"/><circle cx="49.5" cy="23.3" r="1.2"/><path d="M48 26L46 28.5" stroke="#1a1a18" stroke-width="0.8"/>
<path d="M52 34L52.3 28.5L53.3 26L54.6 26.5L55 34Z"/><circle cx="53.6" cy="25" r="1.1"/>
</g>
<g filter="url(#vb2)" fill="#50545c" opacity="0.5"><path d="M21 33L14 46L19 46L25 33Z"/><path d="M30 34L27.5 51L32.5 51L33 34Z"/><path d="M48 33L44 40L48 40L51 33Z"/></g>
</svg>
<div class="a" style="left:98.6px;top:442.8px;width:10.3px;height:7.8px;background:#222;border:1px solid #cfcfcf"></div>
<svg class="a" style="left:99.5px;top:444.5px;" width="9" height="5" viewBox="0 0 9 5"><path d="M0.5 2.5H8.5M2 0.5V4.5M4.5 0.5V4.5M7 0.5V4.5" stroke="#e0e0e0" stroke-width="0.8"/></svg>
<div class="t" style="left:18.9px;top:457.70px;font-size:9px;color:#b0b0b0;transform:scaleX(0.878);-webkit-text-stroke:0.08px #b0b0b0;">vacances.mov</div>
<div class="t" style="left:87.5px;top:457.70px;font-size:9px;color:#c0c0c0;transform:scaleX(0.963);-webkit-text-stroke:0.08px #c0c0c0;">27:23</div>
<div class="a" style="left:119.4px;top:397px;width:97.8px;height:73.5px;border:1.5px solid #3a86e0;border-radius:3px;background:#1a1a1a"></div>
<svg class="a" style="left:123.8px;top:400px" width="90.3" height="51.4" viewBox="0 0 90.3 51.4">
<defs>
<linearGradient id="ubg" x1="0" y1="0" x2="0" y2="1"><stop offset="0" stop-color="#dcdcdc"/><stop offset="0.28" stop-color="#cfcfcf"/><stop offset="0.55" stop-color="#9a9a9a"/><stop offset="0.75" stop-color="#8c8c90"/><stop offset="1" stop-color="#9a9aa0"/></linearGradient>
<filter id="ub" x="-20%" y="-20%" width="140%" height="140%"><feGaussianBlur stdDeviation="0.35"/></filter>
<filter id="ub2" x="-20%" y="-20%" width="140%" height="140%"><feGaussianBlur stdDeviation="1.1"/></filter>
</defs>
<rect width="90.3" height="51.4" fill="url(#ubg)"/>
<g filter="url(#ub2)">
<rect x="0" y="0" width="8" height="16" fill="#eaeaea"/><rect x="8" y="0" width="7" height="15" fill="#7a7a6a"/><rect x="17" y="1" width="5" height="12" fill="#a8a8a8"/><rect x="24" y="0" width="16" height="13" fill="#e4e4e4"/>
<rect x="42" y="0" width="15" height="12" fill="#efefef"/><rect x="58" y="0" width="9" height="13" fill="#8a8a88"/><rect x="68" y="0" width="22" height="14" fill="#d0ccc8"/>
<circle cx="11" cy="2.8" r="2" fill="#30c050"/><circle cx="47" cy="1.5" r="1.8" fill="#e83a3a"/><circle cx="66" cy="1.2" r="1.6" fill="#e03a3a"/>
<rect x="75" y="10" width="14" height="7" fill="#c04848" opacity="0.6"/><rect x="74" y="17" width="16" height="8" fill="#505458"/>
<rect x="0" y="39" width="90.3" height="12.4" fill="#8e8e92"/>
</g>
<g filter="url(#ub)">
<rect x="3.5" y="14" width="29" height="13.5" rx="1.5" fill="#ecebe4"/>
<rect x="5" y="15.8" width="11" height="2.8" fill="#f2b01a"/>
<rect x="17.5" y="16.5" width="14" height="6.5" fill="#3c3c3c"/>
<rect x="4" y="19" width="12" height="6" fill="#8a6a5a"/>
<rect x="35" y="12.5" width="13" height="12" rx="1.5" fill="#f6f6f6"/><rect x="36.5" y="15" width="10" height="3" fill="#5a6068"/>
<rect x="48.5" y="15.5" width="30" height="15" rx="1.5" fill="#e6e8de"/>
<rect x="51" y="17.2" width="10" height="2.8" fill="#f4c020"/>
<rect x="49.5" y="21" width="28" height="6.5" fill="#3e4a42"/>
<rect x="76" y="32" width="14" height="15" rx="1" fill="#ececec"/><rect x="77.5" y="34.5" width="11" height="4" fill="#38404a"/>
</g>
<g filter="url(#ub)"><rect x="1.0" y="27.5" width="2.1" height="13.2" rx="0.8" fill="#6a6a70"/><circle cx="2.1" cy="26.6" r="0.8" fill="#1a1a1e"/><rect x="3.9" y="26.2" width="2.6" height="14.1" rx="0.8" fill="#6a6a70"/><circle cx="5.2" cy="25.3" r="1.0" fill="#1a1a1e"/><rect x="7.2" y="25.8" width="2.6" height="12.4" rx="0.8" fill="#1e1e24"/><circle cx="8.5" cy="24.9" r="1.0" fill="#1a1a1e"/><rect x="10.3" y="27.7" width="2.7" height="11.7" rx="0.8" fill="#202028"/><circle cx="11.6" cy="26.8" r="1.0" fill="#1a1a1e"/><rect x="14.4" y="27.7" width="2.4" height="10.0" rx="0.8" fill="#15151a"/><circle cx="15.6" cy="26.8" r="0.9" fill="#1a1a1e"/><rect x="18.2" y="25.6" width="1.7" height="14.9" rx="0.8" fill="#15151a"/><circle cx="19.0" cy="24.7" r="0.6" fill="#1a1a1e"/><rect x="21.9" y="27.6" width="2.0" height="10.2" rx="0.8" fill="#3a3440"/><circle cx="22.9" cy="26.7" r="0.8" fill="#1a1a1e"/><rect x="25.2" y="27.8" width="2.2" height="11.0" rx="0.8" fill="#4a5a78"/><circle cx="26.3" cy="26.9" r="0.8" fill="#1a1a1e"/><rect x="28.0" y="28.8" width="2.3" height="8.6" rx="0.8" fill="#4a5a78"/><circle cx="29.1" cy="27.9" r="0.9" fill="#1a1a1e"/><rect x="30.5" y="26.5" width="1.9" height="10.8" rx="0.8" fill="#1e1e24"/><circle cx="31.5" cy="25.6" r="0.7" fill="#1a1a1e"/><rect x="33.3" y="26.9" width="2.6" height="14.0" rx="0.8" fill="#15151a"/><circle cx="34.6" cy="26.0" r="1.0" fill="#1a1a1e"/><rect x="35.6" y="25.7" width="2.7" height="12.8" rx="0.8" fill="#202028"/><circle cx="37.0" cy="24.8" r="1.0" fill="#1a1a1e"/><rect x="38.4" y="26.2" width="2.3" height="13.5" rx="0.8" fill="#5a4a44"/><circle cx="39.6" cy="25.3" r="0.9" fill="#1a1a1e"/><rect x="40.4" y="28.9" width="2.0" height="11.2" rx="0.8" fill="#1e1e24"/><circle cx="41.4" cy="28.0" r="0.8" fill="#1a1a1e"/><rect x="42.6" y="25.5" width="2.4" height="13.3" rx="0.8" fill="#6a6a70"/><circle cx="43.8" cy="24.6" r="0.9" fill="#1a1a1e"/><rect x="44.8" y="27.1" width="2.3" height="10.7" rx="0.8" fill="#2a2a30"/><circle cx="45.9" cy="26.2" r="0.9" fill="#1a1a1e"/><rect x="47.6" y="26.9" width="2.1" height="14.1" rx="0.8" fill="#15151a"/><circle cx="48.6" cy="26.0" r="0.8" fill="#1a1a1e"/><rect x="50.0" y="28.3" width="2.8" height="9.9" rx="0.8" fill="#15151a"/><circle cx="51.4" cy="27.4" r="1.1" fill="#1a1a1e"/><rect x="52.3" y="28.5" width="2.1" height="11.1" rx="0.8" fill="#1e1e24"/><circle cx="53.4" cy="27.6" r="0.8" fill="#1a1a1e"/><rect x="54.2" y="27.0" width="1.8" height="10.0" rx="0.8" fill="#5a4a44"/><circle cx="55.1" cy="26.1" r="0.7" fill="#1a1a1e"/><rect x="58.0" y="25.8" width="2.1" height="12.1" rx="0.8" fill="#3a3440"/><circle cx="59.1" cy="24.9" r="0.8" fill="#1a1a1e"/><rect x="59.9" y="27.7" width="2.0" height="9.8" rx="0.8" fill="#6a6a70"/><circle cx="60.9" cy="26.8" r="0.8" fill="#1a1a1e"/><rect x="63.7" y="26.9" width="1.8" height="12.7" rx="0.8" fill="#4a5a78"/><circle cx="64.5" cy="26.0" r="0.7" fill="#1a1a1e"/><rect x="67.6" y="26.4" width="2.6" height="11.4" rx="0.8" fill="#3a3440"/><circle cx="68.9" cy="25.5" r="1.0" fill="#1a1a1e"/><rect x="71.1" y="27.2" width="2.1" height="10.1" rx="0.8" fill="#15151a"/><circle cx="72.1" cy="26.3" r="0.8" fill="#1a1a1e"/></g>
<g opacity="0.55" filter="url(#ub)"><path d="M0 41.5L35 38.5" stroke="#e0e0e0" stroke-width="1"/><path d="M48 50L72 43" stroke="#e0e0e0" stroke-width="0.9"/><path d="M20 50L40 46" stroke="#d0d0d0" stroke-width="0.7"/></g>
</svg>
<div class="a" style="left:190.8px;top:443px;width:10.6px;height:8px;background:#1d5fb8;border:1px solid #5aa0f0"></div>
<svg class="a" style="left:192px;top:445px;" width="8" height="4" viewBox="0 0 8 4"><rect x="0" y="0.5" width="2" height="3" fill="#e0e0e0"/><rect x="3" y="0.5" width="2" height="3" fill="#e0e0e0"/><rect x="6" y="0.5" width="2" height="3" fill="#e0e0e0"/></svg>
<div class="a" style="left:202.8px;top:443px;width:10.6px;height:8px;background:#1d5fb8;border:1px solid #5aa0f0"></div>
<svg class="a" style="left:203.6px;top:444.5px;" width="9" height="5" viewBox="0 0 9 5"><path d="M0.5 2.5H8.5M2 0.5V4.5M4.5 0.5V4.5M7 0.5V4.5" stroke="#e0e0e0" stroke-width="0.8"/></svg>
<div class="t" style="left:123px;top:457.70px;font-size:9px;color:#c0c0c0;transform:scaleX(0.917);-webkit-text-stroke:0.08px #c0c0c0;">urban.mov</div>
<div class="t" style="left:191.7px;top:457.70px;font-size:9px;color:#c8c8c8;transform:scaleX(0.959);-webkit-text-stroke:0.08px #c8c8c8;">31:15</div>
<div class="a" style="left:49px;top:494px;width:31px;height:10px;border:1px solid #2fb57a;border-bottom:none;border-radius:2px 2px 0 0"></div>
<div class="a" style="left:62.5px;top:494px;width:1px;height:8px;background:#2fb57a;"></div>
<svg class="a" style="left:52px;top:495px;" width="26" height="6" viewBox="0 0 26 6"><path d="M5 6V3M7 6V1M9 6V4M13 6V2M15 6V0.5M17 6V3M21 6V1" stroke="#2fb57a" stroke-width="1"/></svg>
<div class="a" style="left:130.9px;top:480px;width:76.5px;height:21px;background:linear-gradient(160deg,#0a1e56,#0c2668 60%,#0a1f58);"></div>
<div class="a" style="left:117.3px;top:472px;width:0.8px;height:29px;background:#1f1f1f;"></div>
<div class="a" style="left:12.4px;top:501.2px;width:213px;height:27px;background:#1e1e1e;"></div>
<svg class="a" style="left:13.5px;top:509.5px;" width="12" height="12" viewBox="0 0 12 12"><path d="M1 11L1.8 8L8.5 1.3L10.7 3.5L4 10.2Z" fill="#2fc28a"/></svg>
<svg class="a" style="left:35px;top:511.5px;" width="12" height="9" viewBox="0 0 12 9"><rect x="0.5" y="0.5" width="2.5" height="2.5" fill="#cfcfcf"/><rect x="0.5" y="5.5" width="2.5" height="2.5" fill="#cfcfcf"/><rect x="4.5" y="1.2" width="7" height="1.2" fill="#cfcfcf"/><rect x="4.5" y="6.2" width="7" height="1.2" fill="#cfcfcf"/></svg>
<div class="a" style="left:54.7px;top:508.2px;width:15.6px;height:16px;background:#4a4a4a;border-radius:3px"></div>
<svg class="a" style="left:57.5px;top:511.0px;" width="10" height="10" viewBox="0 0 10 10"><rect x="0.5" y="0.5" width="9" height="6.5" fill="#e0e0e0"/><rect x="0.5" y="8" width="9" height="1.3" fill="#e0e0e0"/></svg>
<svg class="a" style="left:77px;top:511.0px;" width="14" height="10" viewBox="0 0 14 10"><rect x="0.5" y="0.5" width="6" height="5" fill="#a0a0a0"/><rect x="3" y="2.5" width="6" height="5" fill="#b8b8b8" stroke="#1e1e1e" stroke-width="0.6"/><rect x="6" y="4.5" width="7.5" height="5" fill="#cfcfcf" stroke="#1e1e1e" stroke-width="0.6"/></svg>
<svg class="a" style="left:101.5px;top:511.0px;" width="8" height="8" viewBox="0 0 8 8"><circle cx="4" cy="4" r="2.8" fill="none" stroke="#cfcfcf" stroke-width="1.3"/></svg>
<div class="a" style="left:111px;top:514.5px;width:36px;height:1px;background:#5a5a5a;"></div>
<svg class="a" style="left:164px;top:510.5px;" width="10" height="10" viewBox="0 0 10 10"><rect x="0.5" y="0.5" width="9" height="1.4" fill="#bdbdbd"/><rect x="0.5" y="3.2" width="9" height="1.4" fill="#bdbdbd"/><rect x="0.5" y="5.9" width="7" height="1.4" fill="#bdbdbd"/><rect x="0.5" y="8.6" width="5" height="1.4" fill="#bdbdbd"/></svg>
<svg class="a" style="left:184.5px;top:511.0px;" width="12" height="9" viewBox="0 0 12 9"><rect x="0.5" y="1" width="3" height="7" fill="#a8a8a8"/><rect x="4.5" y="2" width="3" height="6" fill="#a8a8a8"/><rect x="8.5" y="1" width="3" height="7" fill="#a8a8a8"/></svg>
<svg class="a" style="left:207.5px;top:510.0px;" width="10" height="11" viewBox="0 0 10 11"><circle cx="5.8" cy="4" r="3" fill="none" stroke="#cfcfcf" stroke-width="1.2"/><path d="M3.8 6.2L0.8 9.8" stroke="#cfcfcf" stroke-width="1.4"/></svg>
<svg class="a" style="left:227.5px;top:511.0px;" width="10" height="9" viewBox="0 0 10 9"><path d="M0.5 1H4L5 2.2H9.5V8.5H0.5Z" fill="#a8a8a8"/></svg>
<div class="a" style="left:248.6px;top:343.6px;width:16px;height:15.6px;background:#1a73e8;border-radius:2px"></div>
<svg class="a" style="left:252px;top:345.5px;" width="11" height="12" viewBox="0 0 11 12"><path d="M1 0.8V11.2L4.3 8.3L9.8 7.9Z" fill="#ffffff"/></svg>
<svg class="a" style="left:250px;top:367px;" width="14" height="11" viewBox="0 0 14 11"><path d="M0.8 1H4M0.8 1V4M0.8 6V9H4" fill="none" stroke="#c8c8c8" stroke-width="1" stroke-dasharray="1.2 0.8"/><path d="M4.5 5H9" stroke="#c8c8c8" stroke-width="1.3"/><path d="M8.5 2.5L11 5L8.5 7.5Z" fill="#c8c8c8"/><rect x="12" y="9" width="1.5" height="1.5" fill="#c8c8c8"/></svg>
<svg class="a" style="left:250px;top:389px;" width="14" height="11" viewBox="0 0 14 11"><rect x="6" y="0.5" width="1.2" height="9" fill="#c8c8c8"/><path d="M0.5 5L3.5 2.5V7.5Z M12.5 5L9.5 2.5V7.5Z" fill="#c8c8c8"/><path d="M3 5H10" stroke="#c8c8c8" stroke-width="1"/><rect x="12" y="9" width="1.5" height="1.5" fill="#c8c8c8"/></svg>
<svg class="a" style="left:250.5px;top:410px;" width="12" height="12" viewBox="0 0 12 12"><g transform="rotate(45 6 6)"><rect x="3.4" y="1" width="5.2" height="10" fill="none" stroke="#c8c8c8" stroke-width="1.6"/><rect x="5.4" y="3.3" width="1.2" height="5.4" fill="#c8c8c8"/></g></svg>
<svg class="a" style="left:249px;top:431.5px;" width="15" height="12" viewBox="0 0 15 12"><rect x="0.5" y="0.5" width="1.3" height="10" fill="#c8c8c8"/><rect x="13.2" y="0.5" width="1.3" height="10" fill="#c8c8c8"/><path d="M3 5.5H12" stroke="#c8c8c8" stroke-width="1.2"/><path d="M2.5 5.5L5 3.3V7.7ZM12.5 5.5L10 3.3V7.7Z" fill="#c8c8c8"/></svg>
<svg class="a" style="left:250px;top:452px;" width="13" height="13" viewBox="0 0 13 13"><path d="M1 12L2.2 7.2L7 2.6L10.4 6L5.8 10.8Z" fill="#c8c8c8"/><path d="M7.8 1.8L9 0.6L12.4 4L11.2 5.2Z" fill="#c8c8c8"/><path d="M1.3 11.7L4.8 8.2" stroke="#1e1e1e" stroke-width="0.8"/><circle cx="5.2" cy="7.8" r="0.9" fill="#1e1e1e"/></svg>
<svg class="a" style="left:250px;top:474px;" width="14" height="12" viewBox="0 0 14 12"><rect x="0.8" y="0.8" width="10.4" height="9.4" fill="#3c3c3c" stroke="#c8c8c8" stroke-width="1.3"/><rect x="12" y="10.3" width="1.5" height="1.5" fill="#c8c8c8"/></svg>
<svg class="a" style="left:250px;top:494px;" width="14" height="13" viewBox="0 0 14 13"><path d="M3 12.5L0.8 7.5L2 6.5L3.5 8V2L4.8 1.5L5.5 6V1L6.8 0.5L7.5 6V1.5L8.8 1.5L9.3 6.5V3L10.6 3L11 9L9 12.5Z" fill="#c8c8c8"/><rect x="11.8" y="11.3" width="1.5" height="1.5" fill="#c8c8c8"/></svg>
<svg class="a" style="left:250px;top:515px;" width="14" height="13" viewBox="0 0 14 13"><path d="M1 0.8H10.5V3.5H9V2.5H6.5V11H8V12.3H3.5V11H5V2.5H2.5V3.5H1Z" fill="#c8c8c8"/><rect x="12" y="11" width="1.5" height="1.5" fill="#c8c8c8"/></svg>
<svg class="a" style="left:288.5px;top:338px;" width="6" height="6" viewBox="0 0 6 6"><path d="M1 1L5 5M5 1L1 5" stroke="#bdbdbd" stroke-width="1"/></svg>
<div class="t" style="left:299px;top:336.50px;font-size:9px;color:#d0d0d0;-webkit-text-stroke:0.08px #d0d0d0;">icon</div>
<div class="a" style="left:321px;top:338px;width:5.4px;height:5.6px;background:#6a6a6a;"></div>
<div class="a" style="left:321px;top:339.7px;width:5.4px;height:0.6px;background:#2a2a2a;"></div>
<div class="a" style="left:321px;top:341.5px;width:5.4px;height:0.6px;background:#2a2a2a;"></div>
<div class="t" style="left:293.4px;top:353.95px;font-size:9.5px;color:#4c9cf0;font-weight:bold;">00;00;08;00</div>
<div class="a" style="left:290.3px;top:367.7px;width:15.5px;height:15.6px;background:#4a4a4a;border-radius:3px"></div>
<div class="a" style="left:311.7px;top:367.7px;width:15.5px;height:15.6px;background:#4a4a4a;border-radius:3px"></div>
<div class="a" style="left:333px;top:367.7px;width:15.5px;height:15.6px;background:#4a4a4a;border-radius:3px"></div>
<svg class="a" style="left:292px;top:369.5px;" width="12" height="12" viewBox="0 0 12 12"><rect x="5.3" y="1.5" width="1.4" height="9.5" fill="#d8d8d8"/><rect x="4" y="1.2" width="4" height="1.3" fill="#d8d8d8"/><path d="M0.5 4.2H4.3V5.6L3.2 6.5L4.3 7.4V8.8H0.5Z" fill="#c8c8c8"/><path d="M11.5 4.2H7.7V5.6L8.8 6.5L7.7 7.4V8.8H11.5Z" fill="#c8c8c8"/></svg>
<svg class="a" style="left:314.5px;top:370.5px;" width="10" height="10" viewBox="0 0 10 10"><path d="M1.8 9V4.8A3.2 3.2 0 0 1 8.2 4.8V9" fill="none" stroke="#d8d8d8" stroke-width="1.9"/><rect x="0.8" y="7.3" width="2" height="1.8" fill="#f0f0f0"/><rect x="7.2" y="7.3" width="2" height="1.8" fill="#f0f0f0"/></svg>
<svg class="a" style="left:335px;top:369.5px;" width="12" height="12" viewBox="0 0 12 12"><rect x="0.8" y="1.3" width="3.2" height="3.2" fill="#d8d8d8"/><rect x="0.8" y="6.5" width="3.2" height="3.2" fill="none" stroke="#c8c8c8" stroke-width="0.9"/><rect x="5" y="1.3" width="6.2" height="3.2" fill="#c8c8c8"/><path d="M5 4L11.2 6.8L8.5 7.6L10.5 10.5L9.3 11.2L7.4 8.3L5.6 10Z" fill="#e8e8e8" stroke="#4a4a4a" stroke-width="0.5"/></svg>
<svg class="a" style="left:358.5px;top:372px;" width="7" height="7" viewBox="0 0 7 7"><path d="M0.5 0.5H6.5V4.3L3.5 6.5L0.5 4.3Z" fill="#c4c4c4"/></svg>
<svg class="a" style="left:378.5px;top:369.5px;" width="12" height="12" viewBox="0 0 12 12"><path d="M5 5L10.5 10.5" stroke="#d0d0d0" stroke-width="2" stroke-linecap="round"/><path d="M1.2 2.5L3 4.3L4.5 3.5L4.3 1.8L2.5 0.8A3.3 3.3 0 0 1 6.8 5.6L5.6 6.8A3.3 3.3 0 0 1 1.2 2.5Z" fill="#d0d0d0"/></svg>
<svg class="a" style="left:399px;top:370.5px;" width="12" height="9" viewBox="0 0 12 9"><rect x="0.7" y="0.7" width="10.6" height="7.6" rx="1.5" fill="none" stroke="#7e7e7e" stroke-width="1.3"/><path d="M5 3.2A1.5 1.5 0 1 0 5 5.8M9 3.2A1.5 1.5 0 1 0 9 5.8" fill="none" stroke="#8a8a8a" stroke-width="1.2"/></svg>
<div class="a" style="left:290px;top:388px;width:127px;height:0.8px;background:#2e2e2e;"></div>
<div class="a" style="left:282px;top:393.8px;width:665px;height:0.8px;background:#2a2a2a;"></div>
<div class="a" style="left:282px;top:421px;width:665px;height:1px;background:#2a2a2a;"></div>
<div class="a" style="left:282px;top:448.5px;width:665px;height:4px;background:#2d2d2d;"></div>
<div class="a" style="left:282px;top:477.5px;width:665px;height:1px;background:#2a2a2a;"></div>
<div class="a" style="left:282px;top:505px;width:665px;height:1px;background:#2a2a2a;"></div>
<svg class="a" style="left:311px;top:403.5px;" width="8" height="9" viewBox="0 0 8 9"><path d="M2 4V2.5A2 2 0 0 1 6 2.5" fill="none" stroke="#9a9a9a" stroke-width="1.1"/><rect x="0.8" y="4" width="6.4" height="4.5" fill="#9a9a9a"/><rect x="3.3" y="5.5" width="1.4" height="1.8" fill="#1e1e1e"/></svg>
<div class="t" style="left:325px;top:403.95px;font-size:8.5px;color:#9a9a9a;transform:scaleX(1.009);-webkit-text-stroke:0.08px #9a9a9a;">V2</div>
<svg class="a" style="left:341px;top:398px;" width="10" height="8" viewBox="0 0 10 8"><rect x="0.6" y="0.6" width="6.5" height="6.5" fill="none" stroke="#aaaaaa" stroke-width="1"/><path d="M7 3.5L9.5 1.5V6L7 4.5" fill="#aaaaaa"/><path d="M0.6 2.5H7M0.6 5H7" stroke="#aaaaaa" stroke-width="0.6"/></svg>
<svg class="a" style="left:356px;top:398.5px;" width="11" height="7" viewBox="0 0 11 7"><path d="M0.5 3.5Q5.5 -2 10.5 3.5Q5.5 9 0.5 3.5Z" fill="none" stroke="#d0d0d0" stroke-width="1.1"/><circle cx="5.5" cy="3.5" r="1.6" fill="#d0d0d0"/></svg>
<div class="a" style="left:290.6px;top:422.6px;width:15.8px;height:24.9px;background:#0a63d4;border-radius:3px"></div>
<div class="t" style="left:293.20000000000005px;top:430.80px;font-size:8.5px;color:#f0f0f0;transform:scaleX(1.009);-webkit-text-stroke:0.08px #f0f0f0;">V1</div>
<svg class="a" style="left:311px;top:431px;" width="8" height="9" viewBox="0 0 8 9"><path d="M2 4V2.5A2 2 0 0 1 6 2.5" fill="none" stroke="#9a9a9a" stroke-width="1.1"/><rect x="0.8" y="4" width="6.4" height="4.5" fill="#9a9a9a"/><rect x="3.3" y="5.5" width="1.4" height="1.8" fill="#1e1e1e"/></svg>
<div class="a" style="left:322.5px;top:422.6px;width:15.8px;height:24.9px;background:#0a63d4;border-radius:3px"></div>
<div class="t" style="left:325.1px;top:430.80px;font-size:8.5px;color:#f0f0f0;transform:scaleX(1.009);-webkit-text-stroke:0.08px #f0f0f0;">V1</div>
<svg class="a" style="left:341px;top:426.5px;" width="10" height="8" viewBox="0 0 10 8"><rect x="0.6" y="0.6" width="6.5" height="6.5" fill="none" stroke="#aaaaaa" stroke-width="1"/><path d="M7 3.5L9.5 1.5V6L7 4.5" fill="#aaaaaa"/><path d="M0.6 2.5H7M0.6 5H7" stroke="#aaaaaa" stroke-width="0.6"/></svg>
<svg class="a" style="left:356px;top:427px;" width="11" height="7" viewBox="0 0 11 7"><path d="M0.5 3.5Q5.5 -2 10.5 3.5Q5.5 9 0.5 3.5Z" fill="none" stroke="#d0d0d0" stroke-width="1.1"/><circle cx="5.5" cy="3.5" r="1.6" fill="#d0d0d0"/></svg>
<div class="a" style="left:290.6px;top:452.6px;width:15.8px;height:25.3px;background:#0a63d4;border-radius:3px"></div>
<div class="t" style="left:293.20000000000005px;top:461.00px;font-size:8.5px;color:#f0f0f0;transform:scaleX(1.009);-webkit-text-stroke:0.08px #f0f0f0;">A1</div>
<svg class="a" style="left:311px;top:461px;" width="8" height="9" viewBox="0 0 8 9"><path d="M2 4V2.5A2 2 0 0 1 6 2.5" fill="none" stroke="#9a9a9a" stroke-width="1.1"/><rect x="0.8" y="4" width="6.4" height="4.5" fill="#9a9a9a"/><rect x="3.3" y="5.5" width="1.4" height="1.8" fill="#1e1e1e"/></svg>
<div class="a" style="left:322.5px;top:452.6px;width:15.8px;height:25.3px;background:#0a63d4;border-radius:3px"></div>
<div class="t" style="left:325.1px;top:461.00px;font-size:8.5px;color:#f0f0f0;transform:scaleX(1.009);-webkit-text-stroke:0.08px #f0f0f0;">A1</div>
<svg class="a" style="left:341px;top:456.5px;" width="10" height="8" viewBox="0 0 10 8"><rect x="0.6" y="0.6" width="6.5" height="6.5" fill="none" stroke="#aaaaaa" stroke-width="1"/><path d="M7 3.5L9.5 1.5V6L7 4.5" fill="#aaaaaa"/><path d="M0.6 2.5H7M0.6 5H7" stroke="#aaaaaa" stroke-width="0.6"/></svg>
<div class="t" style="left:358.5px;top:456.80px;font-size:7px;color:#8a8a8a;transform:scaleX(1.112);-webkit-text-stroke:0.08px #8a8a8a;">M</div>
<div class="t" style="left:375.5px;top:456.80px;font-size:7px;color:#8a8a8a;transform:scaleX(1.070);-webkit-text-stroke:0.08px #8a8a8a;">S</div>
<svg class="a" style="left:390px;top:455px;" width="8" height="11" viewBox="0 0 8 11"><rect x="2.3" y="0.5" width="3.4" height="6.5" rx="1.7" fill="#bdbdbd"/><path d="M1 5A3 3 0 0 0 7 5M4 8V10.5" fill="none" stroke="#bdbdbd" stroke-width="1"/></svg>
<svg class="a" style="left:311px;top:489px;" width="8" height="9" viewBox="0 0 8 9"><path d="M2 4V2.5A2 2 0 0 1 6 2.5" fill="none" stroke="#9a9a9a" stroke-width="1.1"/><rect x="0.8" y="4" width="6.4" height="4.5" fill="#9a9a9a"/><rect x="3.3" y="5.5" width="1.4" height="1.8" fill="#1e1e1e"/></svg>
<div class="a" style="left:322.5px;top:479.8px;width:15.8px;height:25.3px;background:#0a63d4;border-radius:3px"></div>
<div class="t" style="left:325.1px;top:488.20px;font-size:8.5px;color:#f0f0f0;transform:scaleX(1.009);-webkit-text-stroke:0.08px #f0f0f0;">A2</div>
<svg class="a" style="left:341px;top:484px;" width="10" height="8" viewBox="0 0 10 8"><rect x="0.6" y="0.6" width="6.5" height="6.5" fill="none" stroke="#aaaaaa" stroke-width="1"/><path d="M7 3.5L9.5 1.5V6L7 4.5" fill="#aaaaaa"/><path d="M0.6 2.5H7M0.6 5H7" stroke="#aaaaaa" stroke-width="0.6"/></svg>
<div class="t" style="left:358.5px;top:484.10px;font-size:7px;color:#8a8a8a;transform:scaleX(1.112);-webkit-text-stroke:0.08px #8a8a8a;">M</div>
<div class="t" style="left:375.5px;top:484.10px;font-size:7px;color:#8a8a8a;transform:scaleX(1.070);-webkit-text-stroke:0.08px #8a8a8a;">S</div>
<svg class="a" style="left:390px;top:482px;" width="8" height="11" viewBox="0 0 8 11"><rect x="2.3" y="0.5" width="3.4" height="6.5" rx="1.7" fill="#bdbdbd"/><path d="M1 5A3 3 0 0 0 7 5M4 8V10.5" fill="none" stroke="#bdbdbd" stroke-width="1"/></svg>
<div class="a" style="left:322.5px;top:508.2px;width:15.5px;height:5px;background:#0a63d4;border-radius:3px 3px 0 0"></div>
<div class="a" style="left:282px;top:510px;width:665px;height:17px;background:#1e1e1e;"></div>
<div class="t" style="left:418.6px;top:370.55px;font-size:8.5px;color:#c0c0c0;transform:scaleX(1.032);-webkit-text-stroke:0.08px #c0c0c0;">;00;00</div>
<div class="t" style="left:505.3px;top:370.55px;font-size:8.5px;color:#c0c0c0;transform:scaleX(1.015);-webkit-text-stroke:0.08px #c0c0c0;">00;00;04;00</div>
<div class="t" style="left:742px;top:370.55px;font-size:8.5px;color:#c0c0c0;transform:scaleX(1.100);-webkit-text-stroke:0.08px #c0c0c0;">;12;00</div>
<div class="t" style="left:831.4px;top:370.55px;font-size:8.5px;color:#c0c0c0;transform:scaleX(1.015);-webkit-text-stroke:0.08px #c0c0c0;">00;00;16;00</div>
<svg class="a" style="left:417px;top:379.5px;" width="515" height="8" viewBox="0 0 515 8"><rect x="1.00" y="0" width="0.9" height="7.5" fill="#8a8a8a"/><rect x="8.25" y="4" width="0.9" height="3" fill="#6a6a6a"/><rect x="15.49" y="4" width="0.9" height="3" fill="#6a6a6a"/><rect x="22.74" y="4" width="0.9" height="3" fill="#6a6a6a"/><rect x="29.99" y="4" width="0.9" height="3" fill="#6a6a6a"/><rect x="37.24" y="4" width="0.9" height="3" fill="#6a6a6a"/><rect x="44.48" y="4" width="0.9" height="3" fill="#6a6a6a"/><rect x="51.73" y="4" width="0.9" height="3" fill="#6a6a6a"/><rect x="58.98" y="4" width="0.9" height="3" fill="#6a6a6a"/><rect x="66.22" y="4" width="0.9" height="3" fill="#6a6a6a"/><rect x="73.47" y="4" width="0.9" height="3" fill="#6a6a6a"/><rect x="80.72" y="4" width="0.9" height="3" fill="#6a6a6a"/><rect x="87.96" y="4" width="0.9" height="3" fill="#6a6a6a"/><rect x="95.21" y="4" width="0.9" height="3" fill="#6a6a6a"/><rect x="102.46" y="4" width="0.9" height="3" fill="#6a6a6a"/><rect x="109.71" y="0" width="0.9" height="7.5" fill="#8a8a8a"/><rect x="116.95" y="4" width="0.9" height="3" fill="#6a6a6a"/><rect x="124.20" y="4" width="0.9" height="3" fill="#6a6a6a"/><rect x="131.45" y="4" width="0.9" height="3" fill="#6a6a6a"/><rect x="138.69" y="4" width="0.9" height="3" fill="#6a6a6a"/><rect x="327.11" y="0" width="0.9" height="7.5" fill="#8a8a8a"/><rect x="334.36" y="4" width="0.9" height="3" fill="#6a6a6a"/><rect x="341.61" y="4" width="0.9" height="3" fill="#6a6a6a"/><rect x="348.86" y="4" width="0.9" height="3" fill="#6a6a6a"/><rect x="356.10" y="4" width="0.9" height="3" fill="#6a6a6a"/><rect x="363.35" y="4" width="0.9" height="3" fill="#6a6a6a"/><rect x="370.60" y="4" width="0.9" height="3" fill="#6a6a6a"/><rect x="377.84" y="4" width="0.9" height="3" fill="#6a6a6a"/><rect x="385.09" y="4" width="0.9" height="3" fill="#6a6a6a"/><rect x="392.34" y="4" width="0.9" height="3" fill="#6a6a6a"/><rect x="399.58" y="4" width="0.9" height="3" fill="#6a6a6a"/><rect x="406.83" y="4" width="0.9" height="3" fill="#6a6a6a"/><rect x="414.08" y="4" width="0.9" height="3" fill="#6a6a6a"/><rect x="421.33" y="4" width="0.9" height="3" fill="#6a6a6a"/><rect x="428.57" y="4" width="0.9" height="3" fill="#6a6a6a"/><rect x="435.82" y="0" width="0.9" height="7.5" fill="#8a8a8a"/><rect x="443.07" y="4" width="0.9" height="3" fill="#6a6a6a"/><rect x="450.31" y="4" width="0.9" height="3" fill="#6a6a6a"/><rect x="457.56" y="4" width="0.9" height="3" fill="#6a6a6a"/><rect x="464.81" y="4" width="0.9" height="3" fill="#6a6a6a"/><rect x="472.05" y="4" width="0.9" height="3" fill="#6a6a6a"/><rect x="479.30" y="4" width="0.9" height="3" fill="#6a6a6a"/><rect x="486.55" y="4" width="0.9" height="3" fill="#6a6a6a"/><rect x="493.80" y="4" width="0.9" height="3" fill="#6a6a6a"/><rect x="501.04" y="4" width="0.9" height="3" fill="#6a6a6a"/><rect x="508.29" y="4" width="0.9" height="3" fill="#6a6a6a"/></svg>
<div class="a" style="left:418px;top:387.2px;width:143px;height:2px;background:#c9c31a;"></div>
<div class="a" style="left:418.2px;top:394.9px;width:160px;height:26px;background:#0b5a85;border:1.3px solid #e0e8ec;border-right:none;border-radius:3px 0 0 3px"></div>
<div class="t" style="left:423.6px;top:396.75px;font-size:8.5px;color:#e6eef2;transform:scaleX(0.907);-webkit-text-stroke:0.08px #e6eef2;">urban.mov [V]</div>
<svg class="a" style="left:419.7px;top:405px" width="27.3" height="13.7" viewBox="0 0 90.3 51.4" preserveAspectRatio="xMidYMid slice">
<rect width="90.3" height="51.4" fill="url(#ubg)"/>
<g filter="url(#ub2)">
<rect x="0" y="0" width="8" height="16" fill="#eaeaea"/><rect x="8" y="0" width="7" height="15" fill="#7a7a6a"/><rect x="17" y="1" width="5" height="12" fill="#a8a8a8"/><rect x="24" y="0" width="16" height="13" fill="#e4e4e4"/>
<rect x="42" y="0" width="15" height="12" fill="#efefef"/><rect x="58" y="0" width="9" height="13" fill="#8a8a88"/><rect x="68" y="0" width="22" height="14" fill="#d0ccc8"/>
<circle cx="11" cy="2.8" r="2" fill="#30c050"/><circle cx="47" cy="1.5" r="1.8" fill="#e83a3a"/><circle cx="66" cy="1.2" r="1.6" fill="#e03a3a"/>
<rect x="75" y="10" width="14" height="7" fill="#c04848" opacity="0.6"/><rect x="74" y="17" width="16" height="8" fill="#505458"/>
<rect x="0" y="39" width="90.3" height="12.4" fill="#8e8e92"/>
</g>
<g filter="url(#ub)">
<rect x="3.5" y="14" width="29" height="13.5" rx="1.5" fill="#ecebe4"/>
<rect x="5" y="15.8" width="11" height="2.8" fill="#f2b01a"/>
<rect x="17.5" y="16.5" width="14" height="6.5" fill="#3c3c3c"/>
<rect x="4" y="19" width="12" height="6" fill="#8a6a5a"/>
<rect x="35" y="12.5" width="13" height="12" rx="1.5" fill="#f6f6f6"/><rect x="36.5" y="15" width="10" height="3" fill="#5a6068"/>
<rect x="48.5" y="15.5" width="30" height="15" rx="1.5" fill="#e6e8de"/>
<rect x="51" y="17.2" width="10" height="2.8" fill="#f4c020"/>
<rect x="49.5" y="21" width="28" height="6.5" fill="#3e4a42"/>
<rect x="76" y="32" width="14" height="15" rx="1" fill="#ececec"/><rect x="77.5" y="34.5" width="11" height="4" fill="#38404a"/>
</g>
<g filter="url(#ub)"><rect x="1.0" y="27.5" width="2.1" height="13.2" rx="0.8" fill="#6a6a70"/><circle cx="2.1" cy="26.6" r="0.8" fill="#1a1a1e"/><rect x="3.9" y="26.2" width="2.6" height="14.1" rx="0.8" fill="#6a6a70"/><circle cx="5.2" cy="25.3" r="1.0" fill="#1a1a1e"/><rect x="7.2" y="25.8" width="2.6" height="12.4" rx="0.8" fill="#1e1e24"/><circle cx="8.5" cy="24.9" r="1.0" fill="#1a1a1e"/><rect x="10.3" y="27.7" width="2.7" height="11.7" rx="0.8" fill="#202028"/><circle cx="11.6" cy="26.8" r="1.0" fill="#1a1a1e"/><rect x="14.4" y="27.7" width="2.4" height="10.0" rx="0.8" fill="#15151a"/><circle cx="15.6" cy="26.8" r="0.9" fill="#1a1a1e"/><rect x="18.2" y="25.6" width="1.7" height="14.9" rx="0.8" fill="#15151a"/><circle cx="19.0" cy="24.7" r="0.6" fill="#1a1a1e"/><rect x="21.9" y="27.6" width="2.0" height="10.2" rx="0.8" fill="#3a3440"/><circle cx="22.9" cy="26.7" r="0.8" fill="#1a1a1e"/><rect x="25.2" y="27.8" width="2.2" height="11.0" rx="0.8" fill="#4a5a78"/><circle cx="26.3" cy="26.9" r="0.8" fill="#1a1a1e"/><rect x="28.0" y="28.8" width="2.3" height="8.6" rx="0.8" fill="#4a5a78"/><circle cx="29.1" cy="27.9" r="0.9" fill="#1a1a1e"/><rect x="30.5" y="26.5" width="1.9" height="10.8" rx="0.8" fill="#1e1e24"/><circle cx="31.5" cy="25.6" r="0.7" fill="#1a1a1e"/><rect x="33.3" y="26.9" width="2.6" height="14.0" rx="0.8" fill="#15151a"/><circle cx="34.6" cy="26.0" r="1.0" fill="#1a1a1e"/><rect x="35.6" y="25.7" width="2.7" height="12.8" rx="0.8" fill="#202028"/><circle cx="37.0" cy="24.8" r="1.0" fill="#1a1a1e"/><rect x="38.4" y="26.2" width="2.3" height="13.5" rx="0.8" fill="#5a4a44"/><circle cx="39.6" cy="25.3" r="0.9" fill="#1a1a1e"/><rect x="40.4" y="28.9" width="2.0" height="11.2" rx="0.8" fill="#1e1e24"/><circle cx="41.4" cy="28.0" r="0.8" fill="#1a1a1e"/><rect x="42.6" y="25.5" width="2.4" height="13.3" rx="0.8" fill="#6a6a70"/><circle cx="43.8" cy="24.6" r="0.9" fill="#1a1a1e"/><rect x="44.8" y="27.1" width="2.3" height="10.7" rx="0.8" fill="#2a2a30"/><circle cx="45.9" cy="26.2" r="0.9" fill="#1a1a1e"/><rect x="47.6" y="26.9" width="2.1" height="14.1" rx="0.8" fill="#15151a"/><circle cx="48.6" cy="26.0" r="0.8" fill="#1a1a1e"/><rect x="50.0" y="28.3" width="2.8" height="9.9" rx="0.8" fill="#15151a"/><circle cx="51.4" cy="27.4" r="1.1" fill="#1a1a1e"/><rect x="52.3" y="28.5" width="2.1" height="11.1" rx="0.8" fill="#1e1e24"/><circle cx="53.4" cy="27.6" r="0.8" fill="#1a1a1e"/><rect x="54.2" y="27.0" width="1.8" height="10.0" rx="0.8" fill="#5a4a44"/><circle cx="55.1" cy="26.1" r="0.7" fill="#1a1a1e"/><rect x="58.0" y="25.8" width="2.1" height="12.1" rx="0.8" fill="#3a3440"/><circle cx="59.1" cy="24.9" r="0.8" fill="#1a1a1e"/><rect x="59.9" y="27.7" width="2.0" height="9.8" rx="0.8" fill="#6a6a70"/><circle cx="60.9" cy="26.8" r="0.8" fill="#1a1a1e"/><rect x="63.7" y="26.9" width="1.8" height="12.7" rx="0.8" fill="#4a5a78"/><circle cx="64.5" cy="26.0" r="0.7" fill="#1a1a1e"/><rect x="67.6" y="26.4" width="2.6" height="11.4" rx="0.8" fill="#3a3440"/><circle cx="68.9" cy="25.5" r="1.0" fill="#1a1a1e"/><rect x="71.1" y="27.2" width="2.1" height="10.1" rx="0.8" fill="#15151a"/><circle cx="72.1" cy="26.3" r="0.8" fill="#1a1a1e"/></g>
<g opacity="0.55" filter="url(#ub)"><path d="M0 41.5L35 38.5" stroke="#e0e0e0" stroke-width="1"/><path d="M48 50L72 43" stroke="#e0e0e0" stroke-width="0.9"/><path d="M20 50L40 46" stroke="#d0d0d0" stroke-width="0.7"/></g>
</svg>
<div class="a" style="left:418.2px;top:479.5px;width:160px;height:25.8px;background:#0b5a85;border:1.3px solid #e0e8ec;border-right:none;border-radius:3px 0 0 3px"></div>
<div class="a" style="left:419.6px;top:493.2px;width:142px;height:1px;background:#8ab8d0;"></div>
<div class="a" style="left:419.6px;top:497.2px;width:142px;height:1px;background:#6aa0c0;"></div>
<div class="a" style="left:423.8px;top:490.5px;width:6px;height:6.3px;background:linear-gradient(135deg,#e0e0e0,#7a7a7a);border:0.8px solid #d0d0d0"></div>
<div class="a" style="left:933.4px;top:395px;width:4.3px;height:50px;background:#4a4a4a;border-radius:2px;"></div>
<svg class="a" style="left:931.5px;top:391px;" width="8" height="8" viewBox="0 0 8 8"><circle cx="4" cy="4" r="2.9" fill="#1e1e1e" stroke="#e0e0e0" stroke-width="1.3"/></svg>
<svg class="a" style="left:931.5px;top:441px;" width="8" height="8" viewBox="0 0 8 8"><circle cx="4" cy="4" r="2.9" fill="#1e1e1e" stroke="#e0e0e0" stroke-width="1.3"/></svg>
<div class="a" style="left:933.4px;top:455.3px;width:4.3px;height:51.69999999999999px;background:#4a4a4a;border-radius:2px;"></div>
<svg class="a" style="left:931.5px;top:451.3px;" width="8" height="8" viewBox="0 0 8 8"><circle cx="4" cy="4" r="2.9" fill="#1e1e1e" stroke="#e0e0e0" stroke-width="1.3"/></svg>
<svg class="a" style="left:931.5px;top:503px;" width="8" height="8" viewBox="0 0 8 8"><circle cx="4" cy="4" r="2.9" fill="#1e1e1e" stroke="#e0e0e0" stroke-width="1.3"/></svg>
<div class="a" style="left:293px;top:514.8px;width:638px;height:4.7px;background:#3a3a3a;border-radius:2.5px;"></div>
<div class="a" style="left:293px;top:515px;width:81px;height:4.3px;background:#5a5a5a;border-radius:2px;"></div>
<svg class="a" style="left:289.5px;top:513px;" width="8" height="8" viewBox="0 0 8 8"><circle cx="4" cy="4" r="2.9" fill="#1e1e1e" stroke="#e0e0e0" stroke-width="1.3"/></svg>
<svg class="a" style="left:370.5px;top:513px;" width="8" height="8" viewBox="0 0 8 8"><circle cx="4" cy="4" r="2.9" fill="#1e1e1e" stroke="#e0e0e0" stroke-width="1.3"/></svg>
<div class="a" style="left:958.7px;top:350.2px;width:39.3px;height:155.7px;background:#000000;"></div>
<div class="a" style="left:958.7px;top:356px;width:39.3px;height:0.8px;background:#222222;"></div>
<div class="a" style="left:978px;top:350.2px;width:0.8px;height:6px;background:#2a2a2a;"></div>
<div class="a" style="left:959px;top:504px;width:18.5px;height:2px;background:#8e8818;"></div>
<div class="a" style="left:979px;top:504px;width:18.5px;height:2px;background:#8e8818;"></div>
<svg class="a" style="left:998.8px;top:350px;" width="4" height="157" viewBox="0 0 4 157"><rect x="0" y="6.70" width="3" height="1" fill="#9a9a9a"/><rect x="1" y="10.43" width="1.5" height="0.8" fill="#6a6a6a"/><rect x="1" y="14.06" width="1.5" height="0.8" fill="#6a6a6a"/><rect x="1" y="17.69" width="1.5" height="0.8" fill="#6a6a6a"/><rect x="0" y="21.22" width="3" height="1" fill="#9a9a9a"/><rect x="1" y="24.95" width="1.5" height="0.8" fill="#6a6a6a"/><rect x="1" y="28.58" width="1.5" height="0.8" fill="#6a6a6a"/><rect x="1" y="32.21" width="1.5" height="0.8" fill="#6a6a6a"/><rect x="0" y="35.74" width="3" height="1" fill="#9a9a9a"/><rect x="1" y="39.47" width="1.5" height="0.8" fill="#6a6a6a"/><rect x="1" y="43.10" width="1.5" height="0.8" fill="#6a6a6a"/><rect x="1" y="46.73" width="1.5" height="0.8" fill="#6a6a6a"/><rect x="0" y="50.26" width="3" height="1" fill="#9a9a9a"/><rect x="1" y="53.99" width="1.5" height="0.8" fill="#6a6a6a"/><rect x="1" y="57.62" width="1.5" height="0.8" fill="#6a6a6a"/><rect x="1" y="61.25" width="1.5" height="0.8" fill="#6a6a6a"/><rect x="0" y="64.78" width="3" height="1" fill="#9a9a9a"/><rect x="1" y="68.51" width="1.5" height="0.8" fill="#6a6a6a"/><rect x="1" y="72.14" width="1.5" height="0.8" fill="#6a6a6a"/><rect x="1" y="75.77" width="1.5" height="0.8" fill="#6a6a6a"/><rect x="0" y="79.30" width="3" height="1" fill="#9a9a9a"/><rect x="1" y="83.03" width="1.5" height="0.8" fill="#6a6a6a"/><rect x="1" y="86.66" width="1.5" height="0.8" fill="#6a6a6a"/><rect x="1" y="90.29" width="1.5" height="0.8" fill="#6a6a6a"/><rect x="0" y="93.82" width="3" height="1" fill="#9a9a9a"/><rect x="1" y="97.55" width="1.5" height="0.8" fill="#6a6a6a"/><rect x="1" y="101.18" width="1.5" height="0.8" fill="#6a6a6a"/><rect x="1" y="104.81" width="1.5" height="0.8" fill="#6a6a6a"/><rect x="0" y="108.34" width="3" height="1" fill="#9a9a9a"/><rect x="1" y="112.07" width="1.5" height="0.8" fill="#6a6a6a"/><rect x="1" y="115.70" width="1.5" height="0.8" fill="#6a6a6a"/><rect x="1" y="119.33" width="1.5" height="0.8" fill="#6a6a6a"/><rect x="0" y="122.86" width="3" height="1" fill="#9a9a9a"/><rect x="1" y="126.59" width="1.5" height="0.8" fill="#6a6a6a"/><rect x="1" y="130.22" width="1.5" height="0.8" fill="#6a6a6a"/><rect x="1" y="133.85" width="1.5" height="0.8" fill="#6a6a6a"/><rect x="0" y="137.38" width="3" height="1" fill="#9a9a9a"/><rect x="1" y="141.11" width="1.5" height="0.8" fill="#6a6a6a"/><rect x="1" y="144.74" width="1.5" height="0.8" fill="#6a6a6a"/><rect x="1" y="148.37" width="1.5" height="0.8" fill="#6a6a6a"/><rect x="0" y="151.90" width="3" height="1" fill="#9a9a9a"/></svg>
<div class="t" style="left:1005.5px;top:353.70px;font-size:7px;color:#a8a8a8;-webkit-text-stroke:0.08px #a8a8a8;">0</div>
<div class="t" style="left:1004px;top:368.22px;font-size:7px;color:#a8a8a8;-webkit-text-stroke:0.08px #a8a8a8;">-6</div>
<div class="t" style="left:1004px;top:382.74px;font-size:7px;color:#a8a8a8;-webkit-text-stroke:0.08px #a8a8a8;">-12</div>
<div class="t" style="left:1004px;top:397.26px;font-size:7px;color:#a8a8a8;-webkit-text-stroke:0.08px #a8a8a8;">-18</div>
<div class="t" style="left:1004px;top:411.78px;font-size:7px;color:#a8a8a8;-webkit-text-stroke:0.08px #a8a8a8;">-24</div>
<div class="t" style="left:1004px;top:426.30px;font-size:7px;color:#a8a8a8;-webkit-text-stroke:0.08px #a8a8a8;">-30</div>
<div class="t" style="left:1004px;top:440.82px;font-size:7px;color:#a8a8a8;-webkit-text-stroke:0.08px #a8a8a8;">-36</div>
<div class="t" style="left:1004px;top:455.34px;font-size:7px;color:#a8a8a8;-webkit-text-stroke:0.08px #a8a8a8;">-42</div>
<div class="t" style="left:1004px;top:469.86px;font-size:7px;color:#a8a8a8;-webkit-text-stroke:0.08px #a8a8a8;">-48</div>
<div class="t" style="left:1004px;top:484.38px;font-size:7px;color:#a8a8a8;-webkit-text-stroke:0.08px #a8a8a8;">-54</div>
<div class="t" style="left:1004px;top:498.90px;font-size:7px;color:#a8a8a8;-webkit-text-stroke:0.08px #a8a8a8;">dB</div>
<div class="t" style="left:966.8px;top:511.30px;font-size:7px;color:#9a9a9a;-webkit-text-stroke:0.08px #9a9a9a;">S</div>
<div class="t" style="left:986.2px;top:511.30px;font-size:7px;color:#9a9a9a;-webkit-text-stroke:0.08px #9a9a9a;">S</div>
<div class="a" style="left:561px;top:0px;width:181px;height:1.5px;background:#ebebeb;"></div>
<div class="a" style="left:561px;top:1px;width:181px;height:545px;background:#f9f9f9;border:1px solid #e2e2e2;border-radius:5px 5px 0 0;box-shadow:0 0 2px rgba(0,0,0,0.15)"></div>
<div class="a" style="left:572.7px;top:2px;width:11.3px;height:10.6px;background:#ececec;border-radius:1px"></div>
<svg class="a" style="left:574px;top:4px;" width="9" height="6" viewBox="0 0 9 6"><path d="M1 5L4.5 1L8 5Z" fill="#9a9a9a"/></svg>
<div class="a" style="left:565px;top:233.3px;width:173.8px;height:13.5px;background:#ebebeb;border-radius:2px"></div>
<div class="t" style="left:585.2px;top:15.70px;font-size:10px;color:#1a1a1a;transform:scaleX(0.593);-webkit-text-stroke:0.25px #1a1a1a;"><span style="letter-spacing:-0.1em">カット</span></div>
<div class="t" style="left:585.2px;top:29.80px;font-size:10px;color:#1a1a1a;transform:scaleX(0.593);-webkit-text-stroke:0.25px #1a1a1a;"><span style="letter-spacing:-0.1em">コピー</span></div>
<div class="t" style="left:585.2px;top:43.90px;font-size:10px;color:#a3a3a3;transform:scaleX(0.683);-webkit-text-stroke:0.25px #a3a3a3;"><span style="letter-spacing:-0.02em">属性</span><span style="letter-spacing:-0.1em">をペースト</span>...</div>
<div class="t" style="left:585.2px;top:57.10px;font-size:10px;color:#1a1a1a;transform:scaleX(0.751);-webkit-text-stroke:0.25px #1a1a1a;"><span style="letter-spacing:-0.02em">属性</span><span style="letter-spacing:-0.1em">を</span><span style="letter-spacing:-0.02em">削除</span>...</div>
<div class="t" style="left:585.2px;top:71.40px;font-size:10px;color:#1a1a1a;transform:scaleX(0.775);-webkit-text-stroke:0.25px #1a1a1a;"><span style="letter-spacing:-0.02em">消去</span></div>
<div class="t" style="left:585.2px;top:84.60px;font-size:10px;color:#1a1a1a;transform:scaleX(0.683);-webkit-text-stroke:0.25px #1a1a1a;"><span style="letter-spacing:-0.1em">リップル</span><span style="letter-spacing:-0.02em">削除</span></div>
<div class="t" style="left:585.2px;top:105.00px;font-size:10px;color:#a3a3a3;transform:scaleX(0.696);-webkit-text-stroke:0.25px #a3a3a3;"><span style="letter-spacing:-0.1em">オリジナルを</span><span style="letter-spacing:-0.02em">編集</span></div>
<div class="t" style="left:585.2px;top:118.30px;font-size:10px;color:#a3a3a3;transform:scaleX(0.759);-webkit-text-stroke:0.25px #a3a3a3;">Adobe Audition <span style="letter-spacing:-0.1em">でクリップを</span><span style="letter-spacing:-0.02em">編集</span></div>
<div class="t" style="left:585.2px;top:132.80px;font-size:10px;color:#a3a3a3;transform:scaleX(0.639);-webkit-text-stroke:0.25px #a3a3a3;"><span style="letter-spacing:-0.1em">ライセンス</span>...</div>
<div class="t" style="left:585.2px;top:146.60px;font-size:10px;color:#1a1a1a;transform:scaleX(0.725);-webkit-text-stroke:0.25px #1a1a1a;">After Effects <span style="letter-spacing:-0.1em">コンポジションに</span><span style="letter-spacing:-0.02em">置</span><span style="letter-spacing:-0.1em">き</span><span style="letter-spacing:-0.02em">換</span><span style="letter-spacing:-0.1em">え</span></div>
<div class="t" style="left:585.2px;top:159.90px;font-size:10px;color:#1a1a1a;transform:scaleX(0.690);-webkit-text-stroke:0.25px #1a1a1a;"><span style="letter-spacing:-0.1em">クリップで</span><span style="letter-spacing:-0.02em">置</span><span style="letter-spacing:-0.1em">き</span><span style="letter-spacing:-0.02em">換</span><span style="letter-spacing:-0.1em">え</span></div>
<div class="t" style="left:585.2px;top:173.90px;font-size:10px;color:#1a1a1a;transform:scaleX(0.676);-webkit-text-stroke:0.25px #1a1a1a;"><span style="letter-spacing:-0.1em">レンダリングして</span><span style="letter-spacing:-0.02em">置</span><span style="letter-spacing:-0.1em">き</span><span style="letter-spacing:-0.02em">換</span><span style="letter-spacing:-0.1em">え</span>...</div>
<div class="t" style="left:585.2px;top:187.20px;font-size:10px;color:#a3a3a3;transform:scaleX(0.700);-webkit-text-stroke:0.25px #a3a3a3;"><span style="letter-spacing:-0.1em">レンダリング</span><span style="letter-spacing:-0.02em">前</span><span style="letter-spacing:-0.1em">に</span><span style="letter-spacing:-0.02em">戻</span><span style="letter-spacing:-0.1em">す</span></div>
<div class="t" style="left:585.2px;top:201.20px;font-size:10px;color:#a3a3a3;transform:scaleX(0.653);-webkit-text-stroke:0.25px #a3a3a3;"><span style="letter-spacing:-0.1em">ソースクリップからキャプションを</span><span style="letter-spacing:-0.02em">復元</span></div>
<div class="t" style="left:585.2px;top:221.00px;font-size:10px;color:#1a1a1a;transform:scaleX(0.785);-webkit-text-stroke:0.25px #1a1a1a;"><span style="letter-spacing:-0.02em">有効</span></div>
<div class="t" style="left:585.2px;top:235.30px;font-size:10px;color:#1a1a1a;transform:scaleX(0.708);-webkit-text-stroke:0.25px #1a1a1a;"><span style="letter-spacing:-0.1em">リンク</span><span style="letter-spacing:-0.02em">解除</span></div>
<div class="t" style="left:585.2px;top:249.00px;font-size:10px;color:#a3a3a3;transform:scaleX(0.672);-webkit-text-stroke:0.25px #a3a3a3;"><span style="letter-spacing:-0.1em">グループ</span><span style="letter-spacing:-0.02em">化</span></div>
<div class="t" style="left:585.2px;top:262.60px;font-size:10px;color:#a3a3a3;transform:scaleX(0.698);-webkit-text-stroke:0.25px #a3a3a3;"><span style="letter-spacing:-0.1em">グループ</span><span style="letter-spacing:-0.02em">解除</span></div>
<div class="t" style="left:585.2px;top:276.80px;font-size:10px;color:#a3a3a3;transform:scaleX(0.785);-webkit-text-stroke:0.25px #a3a3a3;"><span style="letter-spacing:-0.02em">同期</span></div>
<div class="t" style="left:585.2px;top:290.60px;font-size:10px;color:#a3a3a3;transform:scaleX(0.677);-webkit-text-stroke:0.25px #a3a3a3;"><span style="letter-spacing:-0.1em">クリップを</span><span style="letter-spacing:-0.02em">統合</span>...</div>
<div class="t" style="left:585.2px;top:304.30px;font-size:10px;color:#1a1a1a;transform:scaleX(0.625);-webkit-text-stroke:0.25px #1a1a1a;"><span style="letter-spacing:-0.1em">ネスト</span>...</div>
<div class="t" style="left:585.2px;top:318.30px;font-size:10px;color:#1a1a1a;transform:scaleX(0.680);-webkit-text-stroke:0.25px #1a1a1a;"><span style="letter-spacing:-0.1em">サブシーケンスを</span><span style="letter-spacing:-0.02em">作成</span></div>
<div class="t" style="left:585.2px;top:332.00px;font-size:10px;color:#a3a3a3;transform:scaleX(0.650);-webkit-text-stroke:0.25px #a3a3a3;"><span style="letter-spacing:-0.1em">マルチカメラ</span></div>
<div class="t" style="left:585.2px;top:351.70px;font-size:10px;color:#1a1a1a;transform:scaleX(0.674);-webkit-text-stroke:0.25px #1a1a1a;"><span style="letter-spacing:-0.1em">ラベル</span></div>
<div class="t" style="left:585.2px;top:372.00px;font-size:10px;color:#1a1a1a;transform:scaleX(0.652);-webkit-text-stroke:0.25px #1a1a1a;"><span style="letter-spacing:-0.02em">速度</span><span style="letter-spacing:-0.1em">・デュレーション</span>...</div>
<div class="t" style="left:585.2px;top:385.70px;font-size:10px;color:#1a1a1a;transform:scaleX(0.736);-webkit-text-stroke:0.25px #1a1a1a;"><span style="letter-spacing:-0.1em">シーン</span><span style="letter-spacing:-0.02em">編集</span><span style="letter-spacing:-0.1em">の</span><span style="letter-spacing:-0.02em">検出</span>...</div>
<div class="t" style="left:585.2px;top:405.40px;font-size:10px;color:#1a1a1a;transform:scaleX(0.737);-webkit-text-stroke:0.25px #1a1a1a;"><span style="letter-spacing:-0.02em">文字起</span><span style="letter-spacing:-0.1em">こしを</span><span style="letter-spacing:-0.02em">無視</span></div>
<div class="t" style="left:585.2px;top:424.60px;font-size:10px;color:#1a1a1a;transform:scaleX(0.641);-webkit-text-stroke:0.25px #1a1a1a;"><span style="letter-spacing:-0.1em">オーディオゲイン</span>...</div>
<div class="t" style="left:585.2px;top:438.70px;font-size:10px;color:#1a1a1a;transform:scaleX(0.645);-webkit-text-stroke:0.25px #1a1a1a;"><span style="letter-spacing:-0.1em">オーディオチャンネル</span>...</div>
<div class="t" style="left:585.2px;top:452.80px;font-size:10px;color:#1a1a1a;transform:scaleX(0.683);-webkit-text-stroke:0.25px #1a1a1a;"><span style="letter-spacing:-0.1em">オーディオタイプを</span><span style="letter-spacing:-0.02em">自動</span><span style="letter-spacing:-0.1em">タグ</span><span style="letter-spacing:-0.02em">付</span><span style="letter-spacing:-0.1em">け</span></div>
<div class="t" style="left:585.2px;top:466.50px;font-size:10px;color:#1a1a1a;transform:scaleX(0.720);-webkit-text-stroke:0.25px #1a1a1a;"><span style="letter-spacing:-0.1em">スピーチ</span><span style="letter-spacing:-0.02em">強調</span><span style="letter-spacing:-0.1em">を</span><span style="letter-spacing:-0.02em">有効</span><span style="letter-spacing:-0.1em">にする</span></div>
<div class="t" style="left:585.2px;top:486.10px;font-size:10px;color:#1a1a1a;transform:scaleX(0.667);-webkit-text-stroke:0.25px #1a1a1a;"><span style="letter-spacing:-0.1em">フレーム</span><span style="letter-spacing:-0.02em">保持</span><span style="letter-spacing:-0.1em">オプション</span>...</div>
<div class="t" style="left:585.2px;top:499.80px;font-size:10px;color:#1a1a1a;transform:scaleX(0.730);-webkit-text-stroke:0.25px #1a1a1a;"><span style="letter-spacing:-0.1em">フレーム</span><span style="letter-spacing:-0.02em">保持</span><span style="letter-spacing:-0.1em">を</span><span style="letter-spacing:-0.02em">追加</span></div>
<div class="t" style="left:585.2px;top:513.50px;font-size:10px;color:#1a1a1a;transform:scaleX(0.691);-webkit-text-stroke:0.25px #1a1a1a;"><span style="letter-spacing:-0.1em">フレーム</span><span style="letter-spacing:-0.02em">保持</span><span style="letter-spacing:-0.1em">セグメントを</span><span style="letter-spacing:-0.02em">挿入</span></div>
<div class="t" style="left:585.2px;top:527.60px;font-size:10px;color:#1a1a1a;transform:scaleX(0.625);-webkit-text-stroke:0.25px #1a1a1a;"><span style="letter-spacing:-0.1em">フィールドオプション</span>...</div>
<div class="a" style="left:567.2px;top:99.4px;width:169px;height:1px;background:#dddddd;"></div>
<div class="a" style="left:567.2px;top:216px;width:169px;height:1px;background:#dddddd;"></div>
<div class="a" style="left:567.2px;top:346.6px;width:169px;height:1px;background:#dddddd;"></div>
<div class="a" style="left:567.2px;top:366.7px;width:169px;height:1px;background:#dddddd;"></div>
<div class="a" style="left:567.2px;top:400px;width:169px;height:1px;background:#dddddd;"></div>
<div class="a" style="left:567.2px;top:419.6px;width:169px;height:1px;background:#dddddd;"></div>
<div class="a" style="left:567.2px;top:480.7px;width:169px;height:1px;background:#dddddd;"></div>
<svg class="a" style="left:569px;top:222.5px;" width="7" height="6" viewBox="0 0 7 6"><path d="M0.8 3L2.8 5L6.2 0.8" fill="none" stroke="#333" stroke-width="1"/></svg>
<svg class="a" style="left:728.5px;top:161.4px;" width="5" height="7" viewBox="0 0 5 7"><path d="M1 0.8L3.8 3.5L1 6.2" fill="none" stroke="#333" stroke-width="1.1"/></svg>
<svg class="a" style="left:728.5px;top:333.5px;" width="5" height="7" viewBox="0 0 5 7"><path d="M1 0.8L3.8 3.5L1 6.2" fill="none" stroke="#aaa" stroke-width="1.1"/></svg>
<svg class="a" style="left:728.5px;top:353.2px;" width="5" height="7" viewBox="0 0 5 7"><path d="M1 0.8L3.8 3.5L1 6.2" fill="none" stroke="#333" stroke-width="1.1"/></svg>
</body></html>
